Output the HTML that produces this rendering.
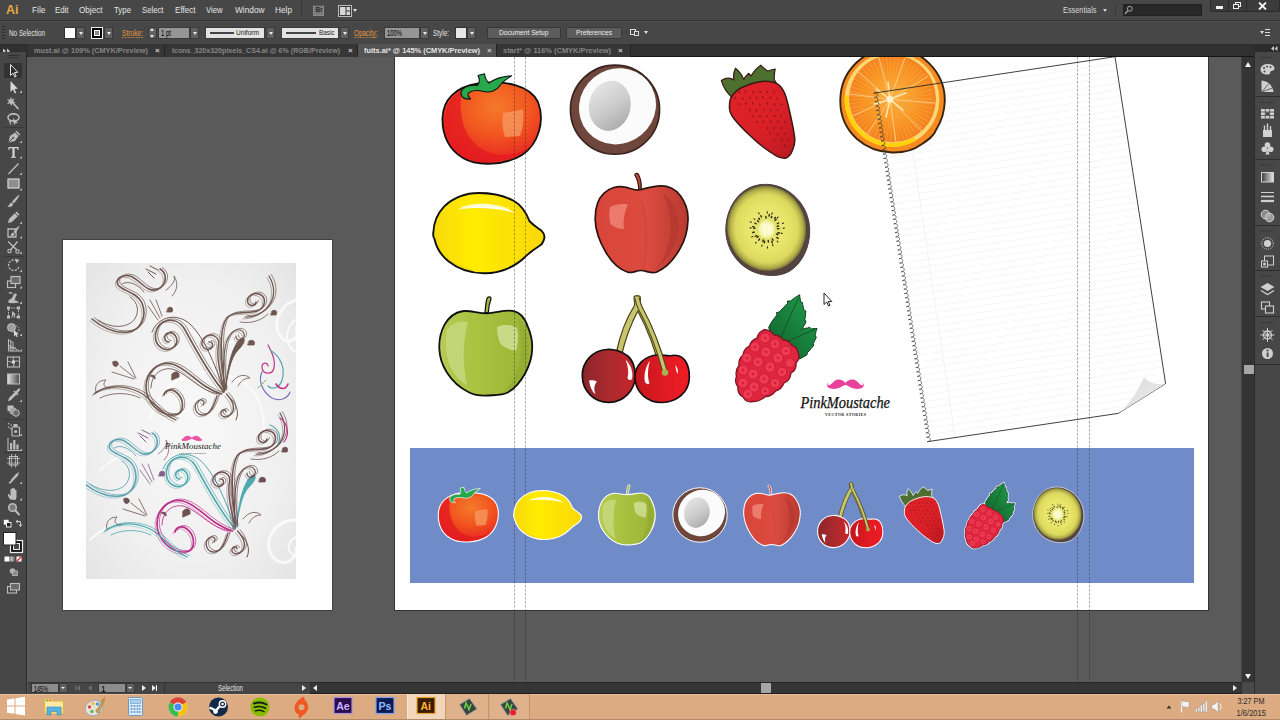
<!DOCTYPE html>
<html><head><meta charset="utf-8">
<style>
*{box-sizing:border-box;margin:0;padding:0}
html,body{width:1280px;height:720px;overflow:hidden;background:#5a5a5a;font-family:"Liberation Sans",sans-serif;}
.abs{position:absolute}
.t{position:absolute;white-space:nowrap;transform-origin:0 0;line-height:1}
#menubar{position:absolute;left:0;top:0;width:1280px;height:21px;background:#474747;border-bottom:1px solid #343434}
#menubar .mi{font-size:9.5px;color:#e4e4e4;top:5px}
#ctrl{position:absolute;left:0;top:21px;width:1280px;height:23px;background:#474747;border-top:1px solid #4f4f4f;}
#ctrl .lbl{font-size:8.5px;color:#e6e6e6;top:7px}
#ctrl .or{color:#e59a3c;border-bottom:1px dotted #e59a3c;height:8.500px}
.dd{position:absolute;top:5px;height:12px;width:9px;background:#5f5f5f;border:1px solid #3a3a3a}
.dd:after{content:"";position:absolute;left:1.5px;top:3.5px;border:2.5px solid transparent;border-top:3px solid #e8e8e8}
.fld{position:absolute;top:5px;height:12px;background:#959595;border:1px solid #3a3a3a;font-size:8px;color:#1c1c1c;line-height:10px;padding-left:2px}
.fld .t{color:#000;font-size:8.5px}
.lbox{position:absolute;top:5px;height:12px;background:#e3e3e3;border:1px solid #3a3a3a;font-size:8px;color:#222;line-height:10px}
.btn{position:absolute;top:5px;height:12px;background:#5c5c5c;border:1px solid #383838;font-size:8px;color:#ececec;line-height:10px;text-align:center;border-radius:1px}
#tabs{position:absolute;left:0;top:44px;width:1254px;height:13px;background:#303030;border-top:1px solid #2a2a2a;border-bottom:1px solid #161616}
.tab{position:absolute;top:-1px;height:13px;background:#363636;border-right:1px solid #242424}
.tab .t{font-size:8px;font-weight:bold;color:#868686;top:3px}
.tab.act{background:#535353;}
.tab.act .t{color:#e4e4e4}
.tab .x{position:absolute;top:2px;font-size:8px;color:#d0d0d0;font-weight:bold;line-height:10px}
#tools{position:absolute;left:0;top:57px;width:27px;height:637px;background:#474747;border-right:1px solid #2e2e2e}
#canvas{position:absolute;left:28px;top:57px;width:1213px;height:625px;background:#5a5a5a;overflow:hidden}
#status{position:absolute;left:28px;top:682px;width:1227px;height:12px;background:#353535;box-shadow:inset 0 1px 0 #272727,inset 0 -1px 0 #241c18}
#vscroll{position:absolute;left:1241px;top:57px;width:14px;height:625px;background:#343434;border-left:1px solid #444;border-right:1px solid #2a2a2a}
#rpanel{position:absolute;left:1254px;top:44px;width:26px;height:650px;background:#474747;border-left:1px solid #2c2c2c}
#taskbar{position:absolute;left:0;top:694px;width:1280px;height:26px;background:#dcab82}
</style></head><body>
<div id="menubar">
  <div class="t" style="left:5.500px;top:3px;font-size:13.500px;font-weight:bold;color:#e9a846;transform:scaleX(0.926)">Ai</div>
  <div class="t mi" style="left:32px;transform:scaleX(0.882)">File</div>
  <div class="t mi" style="left:55px;transform:scaleX(0.824)">Edit</div>
  <div class="t mi" style="left:79px;transform:scaleX(0.856)">Object</div>
  <div class="t mi" style="left:114px;transform:scaleX(0.825)">Type</div>
  <div class="t mi" style="left:142px;transform:scaleX(0.814)">Select</div>
  <div class="t mi" style="left:175px;transform:scaleX(0.850)">Effect</div>
  <div class="t mi" style="left:206px;transform:scaleX(0.808)">View</div>
  <div class="t mi" style="left:235px;transform:scaleX(0.873)">Window</div>
  <div class="t mi" style="left:275px;transform:scaleX(0.870)">Help</div>
  <div class="abs" style="left:301px;top:0;width:1px;height:17px;background:#3a3a3a"></div>
  <div class="abs" style="left:312.500px;top:4.500px;width:11.500px;height:11.500px;background:#7b7b7b;border:1px solid #8a8a8a;border-top-color:#5a5a5a"></div>
  <div class="t" style="left:315.500px;top:7px;font-size:6.500px;color:#2c2c2c;font-weight:bold">Br</div>
  <svg class="abs" style="left:338px;top:4.500px" width="14" height="12" viewBox="0 0 14 12"><rect x=".5" y=".5" width="13" height="11" fill="#3a3a3a" stroke="#bdbdbd" stroke-width="1"></rect><rect x="2" y="2" width="5.500" height="8" fill="#d6d6d6"></rect><rect x="8.500" y="2" width="3.500" height="3.500" fill="#d6d6d6"></rect><rect x="8.500" y="6.500" width="3.500" height="3.500" fill="#d6d6d6"></rect></svg>
  <div class="abs" style="left:352.500px;top:8.500px;border:2.500px solid transparent;border-top:3.500px solid #e0e0e0"></div>
  <div class="t mi" style="left:1063px;color:#d6d6d6;transform:scaleX(0.773)">Essentials</div>
  <div class="abs" style="left:1103px;top:9px;border:2.5px solid transparent;border-top:3px solid #d0d0d0"></div>
  <div class="abs" style="left:1115px;top:3px;width:1px;height:14px;background:#3a3a3a"></div>
  <div class="abs" style="left:1123px;top:4px;width:79px;height:12px;background:#282828;border:1px solid #222"></div>
  <svg class="abs" style="left:1124px;top:5px" width="10" height="10" viewBox="0 0 10 10"><circle cx="5.8" cy="3.8" r="2.4" fill="none" stroke="#a8a8a8" stroke-width="1"></circle><path d="M4 5.6L1 8.8" stroke="#a8a8a8" stroke-width="1.3"></path></svg>
  <div class="abs" style="left:1210px;top:0;width:70px;height:12px;background:#3b3b3b;border:1px solid #2a2a2a;border-top:0;border-radius:0 0 2px 2px"></div>
  <div class="abs" style="left:1228px;top:0;width:1px;height:12px;background:#2a2a2a"></div>
  <div class="abs" style="left:1246px;top:0;width:1px;height:12px;background:#2a2a2a"></div>
  <div class="abs" style="left:1216px;top:6px;width:7px;height:3px;background:#f0f0f0"></div>
  <div class="abs" style="left:1235px;top:2px;width:6px;height:5px;border:1.5px solid #f0f0f0"></div>
  <div class="abs" style="left:1233px;top:4px;width:6px;height:5px;border:1.5px solid #f0f0f0;background:#3b3b3b"></div>
  <svg class="abs" style="left:1258px;top:2px" width="9" height="8" viewBox="0 0 9 8"><path d="M1 0.5L8 7.5M8 0.5L1 7.5" stroke="#f4f4f4" stroke-width="1.8"></path></svg>
</div>
<div id="ctrl">
  <div class="abs" style="left:2px;top:4px;width:3px;height:15px;background:repeating-linear-gradient(180deg,#2e2e2e 0 1px,transparent 1px 3px)"></div>
  <div class="t lbl" style="left:9px;transform:scaleX(0.747)">No Selection</div>
  <div class="abs" style="left:64px;top:5px;width:12px;height:12px;background:#fff;border:1px solid #333"></div>
  <div class="dd" style="left:76px"></div>
  <div class="abs" style="left:91px;top:5px;width:12px;height:12px;background:#000;border:1px solid #eee"></div>
  <div class="abs" style="left:94px;top:8px;width:6px;height:6px;background:#888;border:1px solid #fff"></div>
  <div class="dd" style="left:104px"></div>
  <div class="t lbl or" style="left:122px;transform:scaleX(0.780)">Stroke:</div>
  <div class="abs" style="left:148px;top:5px;width:9px;height:12px;background:#5f5f5f;border:1px solid #3a3a3a"></div>
  <div class="abs" style="left:150px;top:6px;border:2.5px solid transparent;border-bottom:3px solid #e8e8e8;border-top:0"></div>
  <div class="abs" style="left:150px;top:12.5px;border:2.5px solid transparent;border-top:3px solid #e8e8e8;border-bottom:0"></div>
  <div class="fld" style="left:158px;width:32px"><div class="t" style="left:2px;top:1px;transform:scaleX(0.705)">1 pt</div></div>
  <div class="dd" style="left:190px"></div>
  <div class="lbox" style="left:205px;width:60px"><div class="abs" style="left:4px;top:4px;width:24px;height:2px;background:#444"></div><div class="t" style="left:30px;top:1px;transform:scaleX(0.821)">Uniform</div></div>
  <div class="dd" style="left:266px"></div>
  <div class="lbox" style="left:281px;width:58px"><div class="abs" style="left:4px;top:4px;width:30px;height:2px;background:#444"></div><div class="t" style="left:37px;top:1px;transform:scaleX(0.792)">Basic</div></div>
  <div class="dd" style="left:340px"></div>
  <div class="t lbl or" style="left:354px;transform:scaleX(0.754)">Opacity:</div>
  <div class="fld" style="left:384px;width:36px"><div class="t" style="left:2px;top:1px;transform:scaleX(0.690)">100%</div></div>
  <div class="dd" style="left:420px"></div>
  <div class="t lbl" style="left:433px;transform:scaleX(0.752)">Style:</div>
  <div class="abs" style="left:455px;top:5px;width:12px;height:12px;background:#e6e6e6;border:1px solid #333"></div>
  <div class="dd" style="left:467px"></div>
  <div class="btn" style="left:487px;width:74px"><div class="t" style="left:11px;top:1px;transform:scaleX(0.831)">Document Setup</div></div>
  <div class="btn" style="left:566px;width:56px"><div class="t" style="left:9px;top:1px;transform:scaleX(0.834)">Preferences</div></div>
  <div class="abs" style="left:630px;top:7px;width:6px;height:6px;border:1px solid #ddd"></div>
  <div class="abs" style="left:634px;top:9px;width:5px;height:5px;border:1px solid #ddd;background:#474747"></div>
  <div class="abs" style="left:644px;top:9px;border:2.5px solid transparent;border-top:3.5px solid #e0e0e0"></div>
  <div class="abs" style="left:1260px;top:9px;border:2px solid transparent;border-top:3px solid #ddd"></div>
  <div class="abs" style="left:1265px;top:7px;width:5px;height:7px;background:repeating-linear-gradient(180deg,#ddd 0 1px,transparent 1px 3px)"></div>
</div>
<div id="tabs">
  <svg class="abs" style="left:3px;top:3px" width="8" height="6" viewBox="0 0 8 6"><path d="M0 0.500L3 3L0 5.500ZM4 0.500L7 3L4 5.500Z" fill="#c8c8c8"></path></svg>
  <div class="tab" style="left:28px;width:137px"><div class="t" style="left:6px;transform:scaleX(0.917)">must.ai @ 109% (CMYK/Preview)</div><div class="x" style="left:127px">×</div></div>
  <div class="tab" style="left:165px;width:193px"><div class="t" style="left:7px;transform:scaleX(0.886)">Icons_320x320pixels_CS4.ai @ 6% (RGB/Preview)</div><div class="x" style="left:183px">×</div></div>
  <div class="tab act" style="left:358px;width:139px"><div class="t" style="left:6px;transform:scaleX(0.927)">fuits.ai* @ 145% (CMYK/Preview)</div><div class="x" style="left:129px">×</div></div>
  <div class="tab" style="left:497px;width:134px"><div class="t" style="left:6px;transform:scaleX(0.929)">start* @ 116% (CMYK/Preview)</div><div class="x" style="left:121px">×</div></div>
</div>
<div id="tools" style="top:52px;height:642px"></div>
<svg class="abs" style="left:0;top:52px" width="27" height="642" viewBox="0 52 27 642" fill="none" stroke="none">
  <g fill="#2f2f2f"><rect x="8" y="55" width="11" height="1"></rect><rect x="8" y="57" width="11" height="1" opacity=".5"></rect></g>
  <!-- separators -->
  <g fill="#393939"><rect x="3" y="127" width="21" height="1"></rect><rect x="3" y="256" width="21" height="1"></rect><rect x="3" y="353" width="21" height="1"></rect><rect x="3" y="419" width="21" height="1"></rect><rect x="3" y="452" width="21" height="1"></rect></g>
  <!-- selected tool bg -->
  <rect x="4" y="63" width="18" height="15" rx="1" fill="#333"></rect>
  <!-- selection (black arrow w/ white outline) -->
  <path d="M10.5 64.5L10.5 75.5L13 73L14.8 77L16.2 76.3L14.5 72.5L17.8 72.3Z" fill="#2a2a2a" stroke="#e6e6e6" stroke-width="1" stroke-linejoin="round"></path>
  <!-- direct selection (white arrow) -->
  <path d="M10.5 81L10.5 92L13 89.5L14.8 93.5L16.2 92.8L14.5 89L17.8 88.8Z" fill="#d8d8d8"></path>
  <!-- magic wand -->
  <path d="M12 102L18 108.5" stroke="#bdbdbd" stroke-width="1.8" stroke-linecap="round"></path>
  <path d="M11 96.5L11.8 99.5L14.8 98.5L13 101L15.5 103L12.3 103L11.5 106L10 103.2L7 104L9 101.5L6.8 99.3L10 99.8Z" fill="#bdbdbd"></path>
  <!-- lasso -->
  <ellipse cx="13.5" cy="117.5" rx="5.5" ry="3.6" stroke="#bdbdbd" stroke-width="1.6"></ellipse>
  <path d="M10 120C9 122 11 123 10.5 124.5" stroke="#bdbdbd" stroke-width="1.2"></path>
  <path d="M13 118L18 123L15.5 123.2L14 125Z" fill="#bdbdbd"></path>
  <!-- pen -->
  <path d="M8.5 142.5L10 136L15 132.5L18.5 136L15 141Z" fill="#bdbdbd"></path>
  <path d="M8.5 142.5L13 138" stroke="#474747" stroke-width="1"></path>
  <circle cx="13.3" cy="137.7" r="1" fill="#474747"></circle>
  <path d="M16 131.2L19.8 135" stroke="#bdbdbd" stroke-width="1.5"></path>
  <!-- type -->
  <path d="M8.5 147H18.5V150H17.6L17.2 148.3H14.6V156.5L16 157V157.8H11V157L12.4 156.5V148.3H9.8L9.4 150H8.5Z" fill="#d6d6d6"></path>
  <!-- line -->
  <path d="M8.5 174L18.5 163.5" stroke="#bdbdbd" stroke-width="1.3"></path>
  <!-- rectangle -->
  <rect x="8" y="179" width="11" height="9" fill="#8d8d8d" stroke="#d4d4d4" stroke-width="1.2"></rect>
  <!-- brush -->
  <path d="M19.5 194.5C17 196 13.5 199.5 12 202L13.5 203.5C16 201 19 197.5 19.5 194.5Z" fill="#bdbdbd"></path>
  <path d="M11.5 202.5C9.5 203 9.5 205.5 7.5 206.5C10 207.5 13 206.5 13 204Z" fill="#bdbdbd"></path>
  <!-- pencil -->
  <path d="M8 223L9 219L16.5 211.5L19.5 214.5L12 222Z" fill="#bdbdbd"></path>
  <path d="M15 213L18 216" stroke="#474747" stroke-width="1"></path>
  <!-- blob brush/eraser -->
  <path d="M8 229H16V237H8Z" stroke="#bdbdbd" stroke-width="1.3"></path>
  <path d="M19.5 225.5C17.5 227 14.5 230 13.5 232L15 233.5C17 231 19 228 19.5 225.5Z" fill="#bdbdbd"></path>
  <path d="M13 232.5C11 233 11.5 235 10 235.5C12 236.5 14.5 236 14.5 234Z" fill="#bdbdbd"></path>
  <!-- scissors -->
  <path d="M8 241.5L17 250M17.5 241.5L10.5 250" stroke="#bdbdbd" stroke-width="1.3"></path>
  <circle cx="9.5" cy="251" r="1.7" stroke="#bdbdbd" stroke-width="1.1"></circle><circle cx="17.5" cy="251.5" r="1.7" stroke="#bdbdbd" stroke-width="1.1"></circle>
  <!-- rotate -->
  <path d="M17 261A5.3 5.3 0 1 0 18.8 267" stroke="#bdbdbd" stroke-width="1.3" stroke-dasharray="2.2 1.2"></path>
  <path d="M15 258.5L19.5 260L16.5 263.5Z" fill="#bdbdbd"></path>
  <!-- scale -->
  <rect x="7.5" y="281" width="8" height="6.5" stroke="#bdbdbd" stroke-width="1.2"></rect>
  <rect x="11" y="276.5" width="9" height="7" stroke="#bdbdbd" stroke-width="1.2" fill="#6a6a6a"></rect>
  <!-- warp -->
  <path d="M8 302C10 297 11 301 13 296C14 293 16 293 17 295C15 296 16 299 14 301C16 300 18 301 19 303C16 302 14 304 11 303C10 303 9 303 8 302Z" fill="#bdbdbd"></path>
  <path d="M9 293.5C10 292 12 292.5 12 294" stroke="#bdbdbd" stroke-width="1.2"></path>
  <!-- free transform -->
  <rect x="8.5" y="308" width="10" height="9" stroke="#bdbdbd" stroke-width="1" stroke-dasharray="1.5 1"></rect>
  <g fill="#bdbdbd"><rect x="7" y="306.5" width="3" height="3"></rect><rect x="17" y="306.5" width="3" height="3"></rect><rect x="7" y="315.500" width="3" height="3"></rect><rect x="17" y="315.5" width="3" height="3"></rect></g>
  <path d="M12 311L12 316.500L13.500 315L14.600 317L15.400 316.600L14.400 314.600L16.2 314.500Z" fill="#bdbdbd"></path>
  <!-- shape builder -->
  <circle cx="11.5" cy="327.5" r="4" fill="#9a9a9a" stroke="#bdbdbd" stroke-width="1"></circle>
  <circle cx="15.5" cy="329.5" r="3.6" stroke="#bdbdbd" stroke-width="1" stroke-dasharray="1.4 1"></circle>
  <path d="M14 330L14 336.500L15.600 335L16.800 337.300L17.800 336.800L16.600 334.600L18.700 334.400Z" fill="#d8d8d8"></path>
  <!-- perspective grid -->
  <path d="M8.5 339.500V351H19.500M8.500 339.500L13 342.500V351M8.500 345L19.500 351M10.800 341V351M8.500 348H16" stroke="#bdbdbd" stroke-width="1"></path>
  <!-- mesh -->
  <rect x="7.500" y="357" width="12" height="10" stroke="#bdbdbd" stroke-width="1.1"></rect>
  <path d="M7.500 362C10 360 12 364 14 362S18 361 19.500 362M13.500 357C12 360 15 363 13.500 367" stroke="#bdbdbd" stroke-width="1"></path>
  <rect x="12" y="360.500" width="3" height="3" fill="#d8d8d8"></rect>
  <!-- gradient -->
  <defs><linearGradient id="tg" x1="0" x2="1"><stop offset="0" stop-color="#e0e0e0"></stop><stop offset="1" stop-color="#4a4a4a"></stop></linearGradient></defs>
  <rect x="7.500" y="374" width="12" height="10" fill="url(#tg)" stroke="#bdbdbd" stroke-width="1"></rect>
  <!-- eyedropper -->
  <path d="M8 401.500L9 398L14.500 392.500L16.500 394.500L11 400Z" fill="#bdbdbd"></path>
  <path d="M14 391L18 395" stroke="#bdbdbd" stroke-width="1.6"></path>
  <path d="M16.500 392.500L19 389.500" stroke="#bdbdbd" stroke-width="2.4" stroke-linecap="round"></path>
  <!-- blend -->
  <rect x="7.500" y="405.500" width="6" height="5.500" fill="#bdbdbd"></rect>
  <circle cx="13" cy="411" r="3.300" fill="#a0a0a0" stroke="#bdbdbd" stroke-width=".8"></circle>
  <circle cx="16" cy="413" r="3.300" fill="#6a6a6a" stroke="#bdbdbd" stroke-width="1"></circle>
  <!-- symbol sprayer -->
  <rect x="12" y="427" width="7.500" height="9" rx="1" stroke="#bdbdbd" stroke-width="1.2"></rect>
  <rect x="13.500" y="424" width="4" height="3" fill="#bdbdbd"></rect>
  <circle cx="15.700" cy="431.500" r="1.600" fill="#bdbdbd"></circle>
  <g fill="#bdbdbd"><rect x="8" y="423" width="1.300" height="1.300"></rect><rect x="10.500" y="424.500" width="1.300" height="1.300"></rect><rect x="8" y="426.500" width="1.300" height="1.300"></rect><rect x="10" y="428" width="1.200" height="1.200"></rect></g>
  <!-- graph -->
  <path d="M8 438V450.500H20" stroke="#bdbdbd" stroke-width="1.100"></path>
  <g fill="#bdbdbd"><rect x="10" y="443" width="2.200" height="6.500"></rect><rect x="13.200" y="440" width="2.200" height="9.500"></rect><rect x="16.400" y="444.500" width="2.200" height="5"></rect></g>
  <!-- artboard -->
  <rect x="9.500" y="456.500" width="8" height="8.500" stroke="#bdbdbd" stroke-width="1.100"></rect>
  <path d="M7 458.500H20M7 463H20M11.500 454V467.500M15.500 454V467.500" stroke="#bdbdbd" stroke-width=".8"></path>
  <!-- slice -->
  <path d="M8 483L16 474L19 472L18 475.500L10.500 483.500Z" fill="#bdbdbd"></path>
  <path d="M8 483L11 480" stroke="#474747" stroke-width=".8"></path>
  <!-- hand -->
  <path d="M10 499.500C8.500 497 7.500 495 8 494C9 493.500 10 495 10.500 496V489.500C10.500 488.500 12 488.500 12 489.500V493.500V488.500C12 487.500 13.500 487.500 13.500 488.500V493.500V489C13.500 488 15 488 15 489V494V490.500C15 489.500 16.500 489.500 16.500 490.500V496.500C16.500 498 16 499 15.500 500Z" fill="#bdbdbd"></path>
  <!-- zoom -->
  <circle cx="12.500" cy="507.500" r="3.800" stroke="#bdbdbd" stroke-width="1.500" fill="#7a7a7a"></circle>
  <path d="M15.300 510.500L19 514.500" stroke="#bdbdbd" stroke-width="2" stroke-linecap="round"></path>
  <!-- default / swap -->
  <rect x="4" y="520" width="4.500" height="4.500" fill="#fff" stroke="#ddd" stroke-width=".5"></rect>
  <rect x="6.500" y="522.500" width="4.500" height="4.500" fill="#222" stroke="#eee" stroke-width="1"></rect>
  <path d="M16.500 521.500H20.500V526M18 520L16 521.500L18 523M19 524.500L20.500 526.500L22 524.500" stroke="#d8d8d8" stroke-width=".9"></path>
  <!-- stroke (behind) / fill -->
  <rect x="10.500" y="540.500" width="12" height="12" fill="#111" stroke="#efefef" stroke-width="1.200"></rect>
  <rect x="13.500" y="543.500" width="6" height="6" fill="#474747" stroke="#efefef" stroke-width="1"></rect>
  <rect x="3.500" y="532.500" width="12.500" height="12.500" fill="#fff" stroke="#222" stroke-width="1"></rect>
  <!-- color / gradient / none -->
  <rect x="4.500" y="556.500" width="5" height="5" fill="#fff"></rect>
  <rect x="10.500" y="556.500" width="5" height="5" fill="url(#tg)"></rect>
  <rect x="16.500" y="556.500" width="5" height="5" fill="#fff"></rect><path d="M16.500 561.500L21.500 556.500" stroke="#d22" stroke-width="1.200"></path>
  <!-- draw mode -->
  <circle cx="12.500" cy="571" r="2.800" fill="#b0b0b0"></circle><rect x="12.500" y="571" width="5" height="4.500" fill="#8a8a8a" stroke="#bdbdbd" stroke-width=".8"></rect>
  <!-- screen mode -->
  <rect x="7.500" y="586.500" width="9" height="6.500" stroke="#bdbdbd" stroke-width="1.100"></rect>
  <rect x="10.500" y="583.500" width="9" height="6.500" stroke="#bdbdbd" stroke-width="1.100" fill="#6a6a6a"></rect>
  <!-- flyout triangles -->
  <g fill="#bdbdbd">
    <path d="M22 93v-2.500l-2.500 2.500z"></path><path d="M22 143v-2.500l-2.500 2.500z"></path><path d="M22 158.500v-2.500l-2.500 2.500z"></path><path d="M22 175v-2.500l-2.500 2.500z"></path><path d="M22 190.500v-2.500l-2.500 2.500z"></path>
    <path d="M22 224v-2.500l-2.500 2.500z"></path><path d="M22 238.500v-2.500l-2.500 2.500z"></path><path d="M22 254v-2.500l-2.500 2.500z"></path><path d="M22 272v-2.500l-2.500 2.500z"></path><path d="M22 288.500v-2.500l-2.500 2.500z"></path><path d="M22 304v-2.500l-2.500 2.500z"></path>
    <path d="M22 336v-2.500l-2.500 2.500z"></path><path d="M22 351.500v-2.500l-2.500 2.500z"></path><path d="M22 402v-2.500l-2.500 2.500z"></path><path d="M22 436v-2.500l-2.500 2.500z"></path><path d="M22 451v-2.500l-2.500 2.500z"></path><path d="M22 484v-2.500l-2.500 2.500z"></path><path d="M22 500.500v-2.500l-2.500 2.500z"></path>
  </g>
</svg>
<div id="canvas">
  <div class="abs" id="ab1" style="left:35px;top:183px;width:269px;height:369.500px;background:#fff;box-shadow:0 0 0 1px #414141"></div>
  <div class="abs" id="ab2" style="left:367px;top:0;width:813px;height:552.500px;background:#fff;box-shadow:0 0 0 1px #333"></div>
  <div class="abs" style="left:382px;top:391px;width:783.700px;height:134.600px;background:#6f8cc8"></div>
<svg class="abs" style="left:0;top:0" width="1213" height="625" viewBox="28 57 1213 625">
<defs>
  <radialGradient id="gTom" cx="0.55" cy="0.3" r="0.75"><stop offset="0" stop-color="#f47a2a"></stop><stop offset="0.45" stop-color="#f2571f"></stop><stop offset="1" stop-color="#e51b24"></stop></radialGradient>
  <linearGradient id="gLem" x1="0" x2="1"><stop offset="0" stop-color="#f8d90c"></stop><stop offset="0.35" stop-color="#ffec00"></stop><stop offset="1" stop-color="#fbd80a"></stop></linearGradient>
  <linearGradient id="gCav" x1="0.15" y1="0.1" x2="0.85" y2="0.95"><stop offset="0" stop-color="#e4e4e4"></stop><stop offset="0.5" stop-color="#cdcdcd"></stop><stop offset="1" stop-color="#a9a9a9"></stop></linearGradient>
  <radialGradient id="gKiwi" cx="0.5" cy="0.5" r="0.5"><stop offset="0" stop-color="#efec84"></stop><stop offset="0.55" stop-color="#e8e468"></stop><stop offset="0.8" stop-color="#dcd95e"></stop><stop offset="0.92" stop-color="#b3b04a"></stop><stop offset="1" stop-color="#7a7438"></stop></radialGradient>
  <radialGradient id="gOr" cx="0.5" cy="0.48" r="0.5"><stop offset="0" stop-color="#fbb040"></stop><stop offset="0.7" stop-color="#f7901e"></stop><stop offset="1" stop-color="#f58220"></stop></radialGradient>
  <linearGradient id="gChL" x1="0" x2="1"><stop offset="0" stop-color="#8a262b"></stop><stop offset="0.55" stop-color="#ae2a2e"></stop><stop offset="1" stop-color="#c8242a"></stop></linearGradient>
  <linearGradient id="gChR" x1="0" x2="1"><stop offset="0" stop-color="#c4161c"></stop><stop offset="0.6" stop-color="#e31b23"></stop><stop offset="1" stop-color="#ed1c24"></stop></linearGradient>
  <linearGradient id="gStr" x1="0" y1="0" x2="1" y2="1"><stop offset="0" stop-color="#e2232a"></stop><stop offset="0.6" stop-color="#d81f27"></stop><stop offset="1" stop-color="#b8181f"></stop></linearGradient>
  <linearGradient id="gLeaf" x1="0" y1="1" x2="1" y2="0"><stop offset="0" stop-color="#0f5e2c"></stop><stop offset="1" stop-color="#22a04c"></stop></linearGradient>
  <linearGradient id="gAppR" x1="0" x2="1"><stop offset="0" stop-color="#d9453a"></stop><stop offset="0.55" stop-color="#dc4b3f"></stop><stop offset="1" stop-color="#b93a30"></stop></linearGradient>
  <linearGradient id="gAppG" x1="0" x2="1"><stop offset="0" stop-color="#b6cb55"></stop><stop offset="0.4" stop-color="#a9c240"></stop><stop offset="1" stop-color="#9bb336"></stop></linearGradient>

  <g id="tomato">
    <path d="M442.500 118C443 100 455 87 478 83.500C505 80 530 85 538 102C545 120 539 144 522 155C506 165 478 167 463 158C449 150 442 135 442.500 118Z" fill="url(#gTom)" stroke="currentColor" stroke-width="1.800"></path>
    <path d="M444 120C445 105 452 95 462 90C458 110 462 135 480 148C495 158 515 156 528 148C515 162 480 166 464 157C450 149 444 135 444 120Z" fill="#e31a22" opacity=".75"></path>
    <path d="M503 113L523 109.500C524 118 523 128 520 136L505 137C502 128 502 120 503 113Z" fill="#f7935a" opacity=".85"></path>
    <path d="M461 93.500C461 88 468 84.500 477.500 85.500C480 82.500 479.500 78.500 478 75.500L484.500 73.800C485 77.500 486.500 81 489 83C494 79.500 501 76.500 511.500 75.800C507 79 502.500 81.500 500 85.500C497 90.500 490 93 484 91.500C478 90 471.500 90.500 468.500 93C467 95 468.500 97 470.500 99C465.500 99.500 461 97.500 461 93.500Z" fill="#27a84a" stroke="currentColor" stroke-width="1.100" stroke-linejoin="round"></path>
  </g>
  <g id="coconut">
    <circle cx="615" cy="109.700" r="44.600" fill="#6f463b" stroke="currentColor" stroke-width="1.600"></circle>
    <ellipse cx="617.500" cy="106.300" rx="39.300" ry="37.300" fill="#fbfbfb" transform="rotate(-40 617.500 106.300)"></ellipse>
    <ellipse cx="609.800" cy="105.750" rx="20.800" ry="25.200" fill="url(#gCav)" transform="rotate(12 609.800 105.750)"></ellipse>
  </g>
  <g id="strawberry">
    <path d="M721.300 80.400C727 77 731 78 734 80C733 75 734 71 735.500 68.200C739 71 742 75 743.700 79.400C745 77 747 75 748.750 73.300L751 76C754 71 757 67.500 760.900 65.200C763 68 766 70 768 71.250C770 70 773 69.500 775.200 69.200C774 73 774.500 76 774.100 79.400L778 86L746 88L732.500 98C727 93 723 87 721.300 80.400Z" fill="#4d7030" stroke="currentColor" stroke-width="1.200" stroke-linejoin="round"></path>
    <path d="M730.500 98.700C734 92 740 87.500 746.700 85.500C754 82.500 762 80.500 769 81.400C775 82 779 84 781.300 87.500C784 91 786 96 787.300 101.700C790 113 793 125 794.500 136.300C795.300 141 794.500 146 792.400 150.500C791 154 788.500 157.500 785.300 158.200C780 158.500 775 155.500 771.100 152.500C764 148 757 142.500 750.800 136.300C744 130 738 124 733.500 118C730.500 114 729 110 729.500 105.800C729.500 103 729.800 100.500 730.500 98.700Z" fill="url(#gStr)" stroke="currentColor" stroke-width="1.500"></path>
    <g fill="#7c1519" opacity=".85"><ellipse cx="739.5" cy="92.5" rx=".8" ry="1.1" transform="rotate(-20 739.5 92.5)"></ellipse><ellipse cx="745.5" cy="91.5" rx=".8" ry="1.1" transform="rotate(-20 745.5 91.5)"></ellipse><ellipse cx="753.4" cy="92.3" rx=".8" ry="1.1" transform="rotate(-20 753.4 92.3)"></ellipse><ellipse cx="760.2" cy="91.8" rx=".8" ry="1.1" transform="rotate(-20 760.2 91.8)"></ellipse><ellipse cx="767.1" cy="92.1" rx=".8" ry="1.1" transform="rotate(-20 767.1 92.1)"></ellipse><ellipse cx="774.1" cy="91.6" rx=".8" ry="1.1" transform="rotate(-20 774.1 91.6)"></ellipse><ellipse cx="735.4" cy="97.9" rx=".8" ry="1.1" transform="rotate(-20 735.4 97.9)"></ellipse><ellipse cx="742.8" cy="98.6" rx=".8" ry="1.1" transform="rotate(-20 742.8 98.6)"></ellipse><ellipse cx="750.0" cy="98.1" rx=".8" ry="1.1" transform="rotate(-20 750.0 98.1)"></ellipse><ellipse cx="756.4" cy="97.7" rx=".8" ry="1.1" transform="rotate(-20 756.4 97.7)"></ellipse><ellipse cx="762.9" cy="97.4" rx=".8" ry="1.1" transform="rotate(-20 762.9 97.4)"></ellipse><ellipse cx="770.5" cy="97.8" rx=".8" ry="1.1" transform="rotate(-20 770.5 97.8)"></ellipse><ellipse cx="777.4" cy="98.5" rx=".8" ry="1.1" transform="rotate(-20 777.4 98.5)"></ellipse><ellipse cx="739.0" cy="104.1" rx=".8" ry="1.1" transform="rotate(-20 739.0 104.1)"></ellipse><ellipse cx="745.7" cy="103.4" rx=".8" ry="1.1" transform="rotate(-20 745.7 103.4)"></ellipse><ellipse cx="752.8" cy="103.6" rx=".8" ry="1.1" transform="rotate(-20 752.8 103.6)"></ellipse><ellipse cx="760.0" cy="104.6" rx=".8" ry="1.1" transform="rotate(-20 760.0 104.6)"></ellipse><ellipse cx="767.2" cy="103.6" rx=".8" ry="1.1" transform="rotate(-20 767.2 103.6)"></ellipse><ellipse cx="774.5" cy="104.4" rx=".8" ry="1.1" transform="rotate(-20 774.5 104.4)"></ellipse><ellipse cx="781.3" cy="104.5" rx=".8" ry="1.1" transform="rotate(-20 781.3 104.5)"></ellipse><ellipse cx="749.8" cy="110.3" rx=".8" ry="1.1" transform="rotate(-20 749.8 110.3)"></ellipse><ellipse cx="756.3" cy="110.6" rx=".8" ry="1.1" transform="rotate(-20 756.3 110.6)"></ellipse><ellipse cx="764.1" cy="109.6" rx=".8" ry="1.1" transform="rotate(-20 764.1 109.6)"></ellipse><ellipse cx="770.8" cy="110.3" rx=".8" ry="1.1" transform="rotate(-20 770.8 110.3)"></ellipse><ellipse cx="777.5" cy="110.0" rx=".8" ry="1.1" transform="rotate(-20 777.5 110.0)"></ellipse><ellipse cx="753.0" cy="116.5" rx=".8" ry="1.1" transform="rotate(-20 753.0 116.5)"></ellipse><ellipse cx="760.0" cy="116.4" rx=".8" ry="1.1" transform="rotate(-20 760.0 116.4)"></ellipse><ellipse cx="766.8" cy="116.5" rx=".8" ry="1.1" transform="rotate(-20 766.8 116.5)"></ellipse><ellipse cx="774.5" cy="116.0" rx=".8" ry="1.1" transform="rotate(-20 774.5 116.0)"></ellipse><ellipse cx="781.1" cy="116.5" rx=".8" ry="1.1" transform="rotate(-20 781.1 116.5)"></ellipse><ellipse cx="756.8" cy="122.0" rx=".8" ry="1.1" transform="rotate(-20 756.8 122.0)"></ellipse><ellipse cx="763.2" cy="121.8" rx=".8" ry="1.1" transform="rotate(-20 763.2 121.8)"></ellipse><ellipse cx="770.7" cy="121.6" rx=".8" ry="1.1" transform="rotate(-20 770.7 121.6)"></ellipse><ellipse cx="778.0" cy="121.7" rx=".8" ry="1.1" transform="rotate(-20 778.0 121.7)"></ellipse><ellipse cx="785.0" cy="121.8" rx=".8" ry="1.1" transform="rotate(-20 785.0 121.8)"></ellipse><ellipse cx="767.5" cy="128.2" rx=".8" ry="1.1" transform="rotate(-20 767.5 128.2)"></ellipse><ellipse cx="774.0" cy="128.0" rx=".8" ry="1.1" transform="rotate(-20 774.0 128.0)"></ellipse><ellipse cx="781.2" cy="128.1" rx=".8" ry="1.1" transform="rotate(-20 781.2 128.1)"></ellipse><ellipse cx="770.3" cy="133.6" rx=".8" ry="1.1" transform="rotate(-20 770.3 133.6)"></ellipse><ellipse cx="777.5" cy="134.5" rx=".8" ry="1.1" transform="rotate(-20 777.5 134.5)"></ellipse><ellipse cx="784.6" cy="133.5" rx=".8" ry="1.1" transform="rotate(-20 784.6 133.5)"></ellipse><ellipse cx="774.4" cy="140.3" rx=".8" ry="1.1" transform="rotate(-20 774.4 140.3)"></ellipse><ellipse cx="781.5" cy="139.6" rx=".8" ry="1.1" transform="rotate(-20 781.5 139.6)"></ellipse><ellipse cx="788.3" cy="139.5" rx=".8" ry="1.1" transform="rotate(-20 788.3 139.5)"></ellipse><ellipse cx="784.7" cy="145.7" rx=".8" ry="1.1" transform="rotate(-20 784.7 145.7)"></ellipse></g>
  </g>
  <g id="orange">
    <path d="M892.600 48.200C921 48 945 72 944.800 100.500C944.600 112 941 122 936 130C934 136 928 140 922 144C914 150 903 152.800 892 152.500C878 152 866 147 857 139C846 129 840 115 840.300 100C840.600 71 864 48.400 892.600 48.200Z" fill="#f58a1f" stroke="currentColor" stroke-width="1.900"></path>
    <circle cx="892" cy="99.500" r="47.300" fill="#fdd675"></circle>
    <path d="M914.750 138.900A45.500 45.500 0 0 1 846.700 95.500" fill="none" stroke="#ffd200" stroke-width="4.200" opacity=".9"></path>
    <circle cx="892.500" cy="98.800" r="43.500" fill="url(#gOr)"></circle>
    <circle cx="891" cy="99.400" r="27" fill="none" stroke="#fdc070" stroke-width="30" stroke-dasharray=".7 2.100" opacity=".35"></circle>
    <g stroke="#fcd28c" stroke-width="1" opacity=".9"><path d="M890 99.400L850 94M890 99.400L858 72M890 99.400L879 58M890 99.400L905 58M890 99.400L928 76M890 99.400L935 103M890 99.400L922 131M890 99.400L896 142M890 99.400L867 135M890 99.400L852 116"></path></g>
    <g stroke="#fdebb0" stroke-width="1.500" stroke-linecap="round"><path d="M890 99.400L876 89M890 99.400L888 82M890 99.400L906 93M890 99.400L903 110M890 99.400L886 117M890 99.400L874 104"></path></g>
    <circle cx="890" cy="99.400" r="3.300" fill="#fff3cf"></circle>
  </g>
  <g id="lemon">
    <path d="M433.300 233C433.500 222 438 213 444 206.600C453 198 466 193 479 193C492 193 505 196 514 201C521 205 526 212 529.400 221C533 225 538 228 541.400 230.600C544 233 544.800 236 544.300 238.300C543.500 242 542 244.500 539.200 246C534.500 249 530 252 525 257C515 267 500 273 485.600 273.300C472 273.600 458 269 448.400 261.300C440 254.500 436 246 434.500 239C433 237 433 235 433.300 233Z" fill="url(#gLem)" stroke="currentColor" stroke-width="1.900" stroke-linejoin="round"></path>
    <path d="M458 209.500C470 201.500 497 201 516 213.500C498 207.500 474 206.800 458 209.500Z" fill="#fffef0"></path><path d="M462 208C475 204 495 204.500 508 209" stroke="#fff9b0" stroke-width="2" fill="none" opacity=".7"></path>
    <path d="M436 238C440 255 455 268 480 270.500C462 271 443 262 436 238Z" fill="#e7c30a" opacity=".7"></path>
  </g>
  <g id="appleR">
    <path d="M638.800 189.500C638.500 184 637.500 179 635 175.500C634 173.500 637.500 172.500 638.500 174.500C641 179 641.500 184 641.200 189.500Z" fill="#c4473c" stroke="currentColor" stroke-width="1.200"></path>
    <path d="M595.200 219.700C595 209 598 199 603.800 193.400C609 188 617 186 623.500 186.900C628 187.300 632 189.500 636.600 190C642 190.300 650 186 660.600 185.800C668 185.600 676 189 680.300 195.600C685 202 688.300 211 688 219.700C687.700 230 685 240 680.300 248.100C675 258 666 268 656.300 272.200C651 274 646 270.500 641 270.500C636 270.500 632 273.500 627.800 272.200C619 269.500 611 261 606 252.500C600 242.500 595.500 231 595.200 219.700Z" fill="url(#gAppR)" stroke="currentColor" stroke-width="1.700" stroke-linejoin="round"></path>
    <path d="M610 207C615 204.500 622 203.500 628 204.500C624 213 623 221 624 229C619 229 614 227 610.500 224C609 218 609 212 610 207Z" fill="#ee8577" opacity=".85"></path>
    <path d="M661 192C672 198 680 212 678 232C675 250 664 265 653 270C666 262 672 240 670 220C669 208 666 198 661 192Z" fill="#a8332b" opacity=".45"></path>
    <path d="M641 200C647 220 648 250 643 269" stroke="#c23f35" stroke-width="1" fill="none" opacity=".7"></path>
  </g>
  <g id="kiwi">
    <path d="M725.800 231C725.500 213 734 196 748 188.500C757 183.500 770 183 780 187C797 193.500 809 210 809.700 229C810.300 247 802 264 789 271.500C781 276 770 276.500 760 274C741 269.500 726.500 252 725.800 231Z" fill="#54443f" stroke="currentColor" stroke-width="1"></path>
    <ellipse cx="766.600" cy="228.300" rx="39.300" ry="42.600" fill="url(#gKiwi)" transform="rotate(-10 766.600 228.300)"></ellipse>
    <circle cx="766.700" cy="229.200" r="15" fill="#dfe066" opacity=".6"></circle>
    <g fill="#2a2412"><ellipse cx="778.2" cy="228.7" rx="1.500" ry=".75" transform="rotate(-2 778.2 228.7)"></ellipse><ellipse cx="778.7" cy="232.8" rx="1.500" ry=".75" transform="rotate(16 778.7 232.8)"></ellipse><ellipse cx="777.2" cy="234.2" rx="1.500" ry=".75" transform="rotate(25 777.2 234.2)"></ellipse><ellipse cx="777.5" cy="237.8" rx="1.500" ry=".75" transform="rotate(37 777.5 237.8)"></ellipse><ellipse cx="772.6" cy="239.6" rx="1.500" ry=".75" transform="rotate(59 772.6 239.6)"></ellipse><ellipse cx="772.0" cy="242.2" rx="1.500" ry=".75" transform="rotate(67 772.0 242.2)"></ellipse><ellipse cx="768.3" cy="241.2" rx="1.500" ry=".75" transform="rotate(82 768.3 241.2)"></ellipse><ellipse cx="764.5" cy="242.1" rx="1.500" ry=".75" transform="rotate(100 764.5 242.1)"></ellipse><ellipse cx="763.1" cy="240.7" rx="1.500" ry=".75" transform="rotate(108 763.1 240.7)"></ellipse><ellipse cx="759.1" cy="239.6" rx="1.500" ry=".75" transform="rotate(128 759.1 239.6)"></ellipse><ellipse cx="757.7" cy="236.8" rx="1.500" ry=".75" transform="rotate(141 757.7 236.8)"></ellipse><ellipse cx="756.0" cy="235.9" rx="1.500" ry=".75" transform="rotate(149 756.0 235.9)"></ellipse><ellipse cx="753.5" cy="232.3" rx="1.500" ry=".75" transform="rotate(167 753.5 232.3)"></ellipse><ellipse cx="754.2" cy="228.2" rx="1.500" ry=".75" transform="rotate(184 754.2 228.2)"></ellipse><ellipse cx="753.4" cy="226.7" rx="1.500" ry=".75" transform="rotate(190 753.4 226.7)"></ellipse><ellipse cx="755.5" cy="223.4" rx="1.500" ry=".75" transform="rotate(206 755.5 223.4)"></ellipse><ellipse cx="758.1" cy="221.2" rx="1.500" ry=".75" transform="rotate(222 758.1 221.2)"></ellipse><ellipse cx="759.2" cy="218.7" rx="1.500" ry=".75" transform="rotate(233 759.2 218.7)"></ellipse><ellipse cx="761.1" cy="216.3" rx="1.500" ry=".75" transform="rotate(245 761.1 216.3)"></ellipse><ellipse cx="765.9" cy="217.2" rx="1.500" ry=".75" transform="rotate(266 765.9 217.2)"></ellipse><ellipse cx="769.2" cy="215.3" rx="1.500" ry=".75" transform="rotate(281 769.2 215.3)"></ellipse><ellipse cx="771.5" cy="217.1" rx="1.500" ry=".75" transform="rotate(293 771.5 217.1)"></ellipse><ellipse cx="775.0" cy="218.0" rx="1.500" ry=".75" transform="rotate(308 775.0 218.0)"></ellipse><ellipse cx="775.6" cy="220.0" rx="1.500" ry=".75" transform="rotate(316 775.6 220.0)"></ellipse><ellipse cx="777.9" cy="223.3" rx="1.500" ry=".75" transform="rotate(333 777.9 223.3)"></ellipse><ellipse cx="777.8" cy="226.2" rx="1.500" ry=".75" transform="rotate(346 777.8 226.2)"></ellipse><ellipse cx="783.8" cy="228.1" rx="1.200" ry=".6" transform="rotate(-3 783.8 228.1)"></ellipse><ellipse cx="781.8" cy="233.3" rx="1.200" ry=".6" transform="rotate(15 781.8 233.3)"></ellipse><ellipse cx="777.6" cy="241.6" rx="1.200" ry=".6" transform="rotate(47 777.6 241.6)"></ellipse><ellipse cx="772.8" cy="245.2" rx="1.200" ry=".6" transform="rotate(68 772.8 245.2)"></ellipse><ellipse cx="767.5" cy="247.5" rx="1.200" ry=".6" transform="rotate(87 767.5 247.5)"></ellipse><ellipse cx="761.9" cy="245.6" rx="1.200" ry=".6" transform="rotate(107 761.9 245.6)"></ellipse><ellipse cx="755.9" cy="242.7" rx="1.200" ry=".6" transform="rotate(130 755.9 242.7)"></ellipse><ellipse cx="752.2" cy="236.8" rx="1.200" ry=".6" transform="rotate(154 752.2 236.8)"></ellipse><ellipse cx="750.6" cy="227.9" rx="1.200" ry=".6" transform="rotate(184 750.6 227.9)"></ellipse><ellipse cx="750.8" cy="222.0" rx="1.200" ry=".6" transform="rotate(204 750.8 222.0)"></ellipse><ellipse cx="754.4" cy="219.1" rx="1.200" ry=".6" transform="rotate(218 754.4 219.1)"></ellipse><ellipse cx="758.9" cy="213.3" rx="1.200" ry=".6" transform="rotate(243 758.9 213.3)"></ellipse><ellipse cx="767.3" cy="212.4" rx="1.200" ry=".6" transform="rotate(272 767.3 212.4)"></ellipse><ellipse cx="772.0" cy="213.5" rx="1.200" ry=".6" transform="rotate(290 772.0 213.5)"></ellipse><ellipse cx="777.6" cy="217.5" rx="1.200" ry=".6" transform="rotate(314 777.6 217.5)"></ellipse><ellipse cx="783.0" cy="223.3" rx="1.200" ry=".6" transform="rotate(341 783.0 223.3)"></ellipse></g>
    <ellipse cx="766.700" cy="229.200" rx="8" ry="8.800" fill="#f6f5b0"></ellipse>
    <ellipse cx="766.700" cy="229.200" rx="5.500" ry="6" fill="#fbfad0"></ellipse>
  </g>
  <g id="appleG">
    <path d="M485 312.500C485.500 307 485.800 302 487 298.500C488 296 491.500 296.500 491 299C489.500 303 488.500 307.500 488.300 312.500Z" fill="#a4b545" stroke="currentColor" stroke-width="1.200"></path>
    <path d="M439.300 348.400C439 339 441 331 444.700 324.400C449 317 455 312.500 462.200 311.250C470 309.800 478 313.500 487.300 313.250C496 313 504 309.500 512.500 310.800C520 312 525 318 527.800 326.600C530.500 333 532.500 341 532.200 348.400C532 357 529.500 365 525.600 372.500C521 381 515 388.500 508.100 392.200C502 395.500 495 395 488.400 395.500C481 396 475 395.500 468.750 392.200C460 388 452 380.500 446.900 372.500C442 365 439.600 357 439.300 348.400Z" fill="url(#gAppG)" stroke="currentColor" stroke-width="1.800" stroke-linejoin="round"></path>
    <path d="M447 330C452 323 460 320 468 322C463 340 462 362 467 385C457 380 449 368 447 355C445.500 346 445.500 338 447 330Z" fill="#cadb86" opacity=".75"></path>
    <path d="M497 327C504 324 512 324.500 517 328C519 336 518 344 516 351C509 350 503 347 500 343C498 338 497 332 497 327Z" fill="#d3e19a" opacity=".8"></path>
    <path d="M518 318C528 328 531 346 527 364C522 380 512 390 502 393C514 384 520 368 521 350C521.500 338 520 327 518 318Z" fill="#8aa32e" opacity=".5"></path>
  </g>
  <g id="cherries">
    <path d="M634 297.500C633.500 295 640.500 295 640.300 297.500C640 300.500 640 303 641 306C648.500 319 658.500 341 667.500 371C668.500 375 662 376.500 661 373C654.500 347 646 326 637.800 311C631.500 323 625 340 621.500 355.500L616 354C619.500 337 626.500 318 634.500 305.500C635 303 634.500 300.500 634 297.500Z" fill="#c9c56e" stroke="#4d4b1c" stroke-width="1.300" stroke-linejoin="round"></path>
    <path d="M582.300 376C582 362 593 350 607 349.500C616 349 622 352 627 355.500C632 359 635.500 367 635.300 376C635 390 624 402 609 402.300C594 402.500 582.500 391 582.300 376Z" fill="url(#gChL)" stroke="currentColor" stroke-width="1.700"></path>
    <path d="M635 378C634.500 365 645 355.500 658 355C664 354.800 668 356.500 672 355.500C678 354.500 683 357 686 362C688.500 366.500 689.500 372 689.300 378C689 392 677 402.300 662 402.500C647 402.700 635.500 392 635 378Z" fill="url(#gChR)" stroke="currentColor" stroke-width="1.700"></path>
    <path d="M637 298C638 303 639 306 641 309.500C649 324 658 346 664.800 371" fill="none" stroke="#4d4b1c" stroke-width="5.400"></path>
    <path d="M637 298C638 303 639 306 641 309.500C649 324 658 346 664.800 371" fill="none" stroke="#c9c56e" stroke-width="3.200"></path>
    <circle cx="665" cy="372.500" r="3.200" fill="#a9b04e"></circle>
    <g fill="#fff"><path d="M625.500 359.500C631 365 633.500 372 632 379C630.500 381 628 380 627.500 378C629 372 628 366 625.500 359.500Z"></path><path d="M650 360.500C645.500 367 643.500 375 645 382C646 384 648 384.500 649.500 383.500C647 376 648 368 650 360.500Z"></path><path d="M589 380.500C590 387 592 391.500 595.500 394.500C594 390 593.500 385.500 597 381.500C594 380 591 380 589 380.500Z"></path><path d="M675.500 365C678 368 678.500 371 677.500 374C676 371 675.500 368 675.500 365Z" opacity=".9"></path></g>
  </g>
  <g id="raspO" fill="#fff" stroke="#fff" stroke-width="3.400" stroke-linejoin="round"><path d="M768.600 327.800C771 322 774 318.500 777 315L776.500 312.500L779.500 312C782 308.500 785 306 787.500 303.500L787.500 301L790.500 301C793.500 298.500 796.500 296.500 799.700 294.700C799.500 297.500 800.800 299 800.300 301.500L802.500 302.500C802.300 305 803.800 307 803.500 309.500L805.800 311C805.300 314 805.800 316.500 804.800 319.500L806 322C804.800 324.500 803.300 327 801.600 329.700C804.500 327.800 807 328.600 809.500 327.300L811.500 329C813.500 328.300 815.300 328.400 817.200 328.700C815.500 330.500 816.300 333 815 335L816.300 337.500C814.800 339.500 814.800 341.500 813.300 343.300L813.500 346C811 348 810 350.500 807.500 352.500L806.800 355C804.500 356.300 802 357.500 799.700 358.900L778.300 345Z"></path><path d="M764.700 329.700C769 330 772 332 774 335C778 335 781 337 783 340C787 340 790 342 791.500 345C795 346 797.500 348.500 797.800 352C800 356 799 360 796 363C796.500 367 794.500 371 791 373C790.500 378 788 381.500 784 383C782.500 387 779.500 390 775.500 391C773 394.500 769.500 396.500 765.500 396.500C762 399.500 757.500 401.500 753 401.500C749 402.500 745 400.500 743 397C739.500 395 737.500 391 738 387C735.500 384 735 380 736.500 376.500C735.500 372.500 736.500 368.500 739 365.500C738.500 361 740 357.500 743 355C743.500 351 746 347.500 749.500 346C750.500 342 753.500 339 757 338C758 334 761 330.500 764.700 329.700Z"></path></g>
  <g id="raspberry">
    <path d="M768.600 327.800C771 322 774 318.500 777 315L776.500 312.500L779.500 312C782 308.500 785 306 787.500 303.500L787.500 301L790.500 301C793.500 298.500 796.500 296.500 799.700 294.700C799.500 297.500 800.800 299 800.300 301.500L802.500 302.500C802.300 305 803.800 307 803.500 309.500L805.800 311C805.300 314 805.800 316.500 804.800 319.500L806 322C804.800 324.500 803.300 327 801.600 329.700C804.500 327.800 807 328.600 809.500 327.300L811.500 329C813.500 328.300 815.300 328.400 817.200 328.700C815.500 330.500 816.300 333 815 335L816.300 337.500C814.800 339.500 814.800 341.500 813.300 343.300L813.500 346C811 348 810 350.500 807.500 352.500L806.800 355C804.500 356.300 802 357.500 799.700 358.900L778.300 345Z" fill="url(#gLeaf)" stroke="#0b3f1d" stroke-width="1" stroke-linejoin="round"></path>
    <path d="M780 340C786 325 793 310 799 297M784 343C795 338 806 333 815 329.500" stroke="#0c4a22" stroke-width=".8" fill="none"></path>
    <path d="M764.700 329.700C769 330 772 332 774 335C778 335 781 337 783 340C787 340 790 342 791.500 345C795 346 797.500 348.500 797.800 352C800 356 799 360 796 363C796.500 367 794.500 371 791 373C790.500 378 788 381.500 784 383C782.500 387 779.500 390 775.500 391C773 394.500 769.500 396.500 765.500 396.500C762 399.500 757.500 401.500 753 401.500C749 402.500 745 400.500 743 397C739.500 395 737.500 391 738 387C735.500 384 735 380 736.500 376.500C735.500 372.500 736.500 368.500 739 365.500C738.500 361 740 357.500 743 355C743.500 351 746 347.500 749.500 346C750.500 342 753.500 339 757 338C758 334 761 330.500 764.700 329.700Z" fill="#e0253f" stroke="#7d1525" stroke-width="1.300" stroke-linejoin="round"></path>
    <g fill="#ee3a52" stroke="#c01a33" stroke-width=".6">
      <circle cx="765" cy="338" r="5"></circle><circle cx="775" cy="344" r="5"></circle><circle cx="786" cy="351" r="5"></circle><circle cx="755" cy="347" r="5"></circle><circle cx="766" cy="352" r="5.200"></circle><circle cx="778" cy="358" r="5.200"></circle><circle cx="790" cy="363" r="4.500"></circle><circle cx="747" cy="358" r="5"></circle><circle cx="758" cy="362" r="5.200"></circle><circle cx="770" cy="367" r="5.200"></circle><circle cx="782" cy="372" r="4.800"></circle><circle cx="743" cy="370" r="5"></circle><circle cx="753" cy="374" r="5.200"></circle><circle cx="764" cy="379" r="5.200"></circle><circle cx="775" cy="383" r="4.800"></circle><circle cx="743" cy="383" r="5"></circle><circle cx="754" cy="387" r="5.200"></circle><circle cx="765" cy="391" r="4.500"></circle><circle cx="748" cy="394" r="5"></circle>
    </g>
    <g fill="#d11f3a"><circle cx="765" cy="338" r="1.300"></circle><circle cx="775" cy="344" r="1.300"></circle><circle cx="786" cy="351" r="1.300"></circle><circle cx="755" cy="347" r="1.300"></circle><circle cx="766" cy="352" r="1.300"></circle><circle cx="778" cy="358" r="1.300"></circle><circle cx="747" cy="358" r="1.300"></circle><circle cx="758" cy="362" r="1.300"></circle><circle cx="770" cy="367" r="1.300"></circle><circle cx="782" cy="372" r="1.300"></circle><circle cx="743" cy="370" r="1.300"></circle><circle cx="753" cy="374" r="1.300"></circle><circle cx="764" cy="379" r="1.300"></circle><circle cx="775" cy="383" r="1.300"></circle><circle cx="743" cy="383" r="1.300"></circle><circle cx="754" cy="387" r="1.300"></circle><circle cx="765" cy="391" r="1.300"></circle><circle cx="748" cy="394" r="1.300"></circle></g>
  </g>
</defs>

<clipPath id="cpPaper"><path d="M873.600 93.200L1115 56.700L1165.600 383.600L1118.200 413.400L927.200 441.700Z"></path></clipPath>
<!-- left artboard art -->
<radialGradient id="gArt" cx="0.5" cy="0.5" r="0.75"><stop offset="0" stop-color="#f8f8f8"></stop><stop offset="0.6" stop-color="#f0f0f0"></stop><stop offset="1" stop-color="#e2e2e2"></stop></radialGradient>
<rect x="86" y="263" width="210" height="316" fill="url(#gArt)"></rect>
<clipPath id="cpArt"><rect x="86" y="263" width="210" height="316"></rect></clipPath>
<g clip-path="url(#cpArt)" fill="none" stroke-linecap="round">
  <g stroke="#fff" opacity=".75">
    <path d="M296 300C280 305 270 325 282 338C290 346 300 338 296 328" stroke-width="3"></path>
    <path d="M300 318C285 322 282 345 296 352" stroke-width="2"></path>
    <path d="M296 520C275 520 262 540 272 556C280 568 298 562 296 548" stroke-width="3"></path>
    <path d="M300 536C288 538 284 552 296 556" stroke-width="2"></path>
    <path d="M150 420C160 380 200 360 240 380C260 392 270 420 260 450" stroke-width="2"></path>
    <path d="M100 470C130 440 180 450 200 480" stroke-width="1.500"></path>
    <path d="M90 540C110 520 140 520 160 540" stroke-width="2"></path>
    <path d="M170 300C190 340 210 350 240 340" stroke-width="1.500"></path>
  </g>
  <g id="fan">
    <path d="M224 392C212 378 198 354 184 328C176 316 158 318 155.500 334C154 348 168 354 175 346C180 339 174 331 168 333C163 335 164 342 169 342" stroke="var(--a)" stroke-width="1.600"></path>
    <path d="M224 390C214 362 204 338 191 325C178 312 158 316 152 332" stroke="var(--a)" stroke-width="1"></path>
    <path d="M224.500 391C221 378 216 357 218.500 345C220 336 210 332 204 338C199 344 204 351 210 349C214 347 213 341 209 342" stroke="var(--c)" stroke-width="1.400"></path>
    <path d="M225 390C228 375 230 358 238 350C243 345 246 340 243 338C238 338 232 350 229 365C227 375 226 384 225 390Z" stroke="var(--a)" stroke-width="1" fill="var(--a)"></path>
    <path d="M224.500 390C223 370 222 345 230 335C236 326 246 330 244 337C242 342 236 341 236 336" stroke="var(--c)" stroke-width="1.200"></path>
    <path d="M224.500 389C222 362 218 334 226 319C232 310 248 314 257 311C266 308 267 297 259 294C252 292 246 297 248 303C250 307 256 306 256 302" stroke="var(--c)" stroke-width="1.500"></path>
    <path d="M245 317C256 318 270 310 273 297C275 288 272 281 269 276" stroke="var(--c)" stroke-width="1.200"></path>
    <path d="M240 322C252 324 262 320 268 314" stroke="var(--c)" stroke-width=".8"></path>
    <path d="M221.500 394C200 388 188 368 172 364C158 361 146 372 146 387C146 402 160 416 174 415C186 414 184 398 176 392C171 388 165 390 164 395" stroke="var(--b)" stroke-width="1.700"></path>
    <path d="M219 394C200 392 186 372 172 369C160 367 151 376 151 388" stroke="var(--b)" stroke-width=".9"></path>
    <path d="M94 394C104 386 122 384 139 392C152 398 160 414 176 420" stroke="var(--a)" stroke-width="1.300"></path>
    <path d="M100 398C112 392 128 392 140 398" stroke="var(--a)" stroke-width=".8"></path>
    <path d="M226.500 394C232 400 236 408 231 414C227 419 220 417 221 412C222 409 226 409 226 412" stroke="var(--c)" stroke-width="1.300"></path>
    <path d="M217 396C214 406 210 416 202 415C195 414 193 405 198 401C202 398 206 402 203 405" stroke="var(--c)" stroke-width="1.300"></path>
    <path d="M228 396C236 402 240 412 236 420" stroke="var(--c)" stroke-width="1"></path>
    <path d="M120 366L135 378M128 362L136 378M112 372L134 379" stroke="var(--c)" stroke-width=".8"></path>
    <path d="M113 362C116 360 119 362 118 365C116 368 112 366 113 362ZM150 376C153 374 156 376 155 379" stroke="var(--c)" stroke-width="1" fill="var(--c)"></path>
    <path d="M172 374C176 370 180 372 179 377L172 380Z" stroke="var(--c)" stroke-width=".8" fill="var(--c)"></path>
    <path d="M249 341C252 339 256 341 254 345L248 345Z" stroke="var(--c)" stroke-width=".8" fill="var(--c)"></path>
    <path d="M272 311C275 309 278 311 276 315L271 315Z" stroke="var(--c)" stroke-width=".8" fill="var(--c)"></path>
    <path d="M96 392C94 386 98 380 106 380C102 384 104 388 110 388" stroke="var(--c)" stroke-width=".8"></path>
    <path d="M232 382C238 374 246 374 250 378C244 378 240 382 238 386" stroke="var(--c)" stroke-width=".8"></path>
    <g transform="translate(2.300 -1.400)">    <path d="M224 392C212 378 198 354 184 328C176 316 158 318 155.500 334C154 348 168 354 175 346C180 339 174 331 168 333C163 335 164 342 169 342" stroke="var(--a)" stroke-width=".7"></path>
    <path d="M224.500 391C221 378 216 357 218.500 345C220 336 210 332 204 338C199 344 204 351 210 349C214 347 213 341 209 342" stroke="var(--c)" stroke-width=".7"></path>
    <path d="M224.500 390C223 370 222 345 230 335C236 326 246 330 244 337C242 342 236 341 236 336" stroke="var(--c)" stroke-width=".7"></path>
    <path d="M224.500 389C222 362 218 334 226 319C232 310 248 314 257 311C266 308 267 297 259 294C252 292 246 297 248 303C250 307 256 306 256 302" stroke="var(--c)" stroke-width=".7"></path>
    <path d="M245 317C256 318 270 310 273 297C275 288 272 281 269 276" stroke="var(--c)" stroke-width=".7"></path>
    <path d="M221.500 394C200 388 188 368 172 364C158 361 146 372 146 387C146 402 160 416 174 415C186 414 184 398 176 392C171 388 165 390 164 395" stroke="var(--b)" stroke-width=".7"></path>
    <path d="M94 394C104 386 122 384 139 392C152 398 160 414 176 420" stroke="var(--a)" stroke-width=".7"></path>
    <path d="M226.500 394C232 400 236 408 231 414C227 419 220 417 221 412C222 409 226 409 226 412" stroke="var(--c)" stroke-width=".7"></path>
    <path d="M217 396C214 406 210 416 202 415C195 414 193 405 198 401C202 398 206 402 203 405" stroke="var(--c)" stroke-width=".7"></path>
    </g>
    <g transform="translate(-2 1.800)" opacity=".8">    <path d="M224 392C212 378 198 354 184 328C176 316 158 318 155.500 334C154 348 168 354 175 346C180 339 174 331 168 333C163 335 164 342 169 342" stroke="var(--a)" stroke-width=".55"></path>
    <path d="M224.500 391C221 378 216 357 218.500 345C220 336 210 332 204 338C199 344 204 351 210 349C214 347 213 341 209 342" stroke="var(--c)" stroke-width=".55"></path>
    <path d="M224.500 390C223 370 222 345 230 335C236 326 246 330 244 337C242 342 236 341 236 336" stroke="var(--c)" stroke-width=".55"></path>
    <path d="M224.500 389C222 362 218 334 226 319C232 310 248 314 257 311C266 308 267 297 259 294C252 292 246 297 248 303C250 307 256 306 256 302" stroke="var(--c)" stroke-width=".55"></path>
    <path d="M245 317C256 318 270 310 273 297C275 288 272 281 269 276" stroke="var(--c)" stroke-width=".55"></path>
    <path d="M221.500 394C200 388 188 368 172 364C158 361 146 372 146 387C146 402 160 416 174 415C186 414 184 398 176 392C171 388 165 390 164 395" stroke="var(--b)" stroke-width=".55"></path>
    <path d="M94 394C104 386 122 384 139 392C152 398 160 414 176 420" stroke="var(--a)" stroke-width=".55"></path>
    <path d="M226.500 394C232 400 236 408 231 414C227 419 220 417 221 412C222 409 226 409 226 412" stroke="var(--c)" stroke-width=".55"></path>
    <path d="M217 396C214 406 210 416 202 415C195 414 193 405 198 401C202 398 206 402 203 405" stroke="var(--c)" stroke-width=".55"></path>
    </g>
  </g>
  <g id="scurve">
    <path d="M92 319C100 326 114 334 128 332C142 330 147 316 142 303C137 292 122 291 118 285C115 279 122 274 130 276C140 279 148 296 160 288C168 282 166 272 160 269" stroke="var(--a)" stroke-width="1.600"></path>
    <path d="M98 320C110 328 126 329 134 320C140 312 138 302 130 297" stroke="var(--a)" stroke-width=".9"></path>
    <path d="M122 284C128 280 138 284 144 292" stroke="var(--a)" stroke-width=".8"></path>
    <path d="M150 300L160 318M156 300L162 316M148 306L158 320" stroke="var(--c)" stroke-width=".8"></path>
    <path d="M168 308C171 306 174 308 172 312L167 312Z" stroke="var(--c)" stroke-width=".8" fill="var(--c)"></path>
    <path d="M146 269L156 274M148 272L154 278M150 266L158 270" stroke="var(--c)" stroke-width="1"></path>
    <path d="M166 290C172 286 176 280 174 276C178 282 178 290 172 296" stroke="var(--c)" stroke-width=".8"></path>
    <g transform="translate(2.300 -1.400)">    <path d="M92 319C100 326 114 334 128 332C142 330 147 316 142 303C137 292 122 291 118 285C115 279 122 274 130 276C140 279 148 296 160 288C168 282 166 272 160 269" stroke="var(--a)" stroke-width=".7"></path>
    </g>
    <g transform="translate(-2 1.800)" opacity=".8">    <path d="M92 319C100 326 114 334 128 332C142 330 147 316 142 303C137 292 122 291 118 285C115 279 122 274 130 276C140 279 148 296 160 288C168 282 166 272 160 269" stroke="var(--a)" stroke-width=".55"></path>
    </g>
  </g>
</g>
<g clip-path="url(#cpArt)" fill="none" stroke-linecap="round" opacity=".88">
  <use href="#fan" style="--a:#5c4339;--b:#5c4339;--c:#5c4339"></use>
  <use href="#scurve" style="--a:#5c4339;--b:#5c4339;--c:#5c4339"></use>
  <use href="#fan" transform="translate(11 137)" style="--a:#3b9fa6;--b:#b5157a;--c:#5c3a3a"></use>
  <use href="#scurve" transform="translate(-8 164)" style="--a:#4a9aa8;--b:#b5157a;--c:#7a4a78"></use>
  <!-- small colourful motif right -->
  <g stroke-width="1.200">
    <path d="M268 345C272 352 276 360 274 368C272 376 262 374 262 367C262 362 268 362 268 366" stroke="#c0187c"></path>
    <path d="M270 350C280 356 286 368 282 380C280 388 272 390 268 386" stroke="#3b9fa6"></path>
    <path d="M262 372C258 380 262 392 272 398C280 402 288 398 290 392" stroke="#6a62b0"></path>
    <path d="M276 384C280 390 286 390 288 384" stroke="#c0187c" stroke-width="1.600"></path>
    <path d="M258 388L266 380" stroke="#6ab04a" stroke-width="1"></path>
    <path d="M280 418C288 424 290 434 284 442" stroke="#c0187c"></path>
    <path d="M270 425C278 428 282 436 278 444" stroke="#3b9fa6"></path>
  </g>
  <path d="M191.800 438C190 435.500 187 435 185 436.500C183 438 182.500 440 181 439.500C182 441.500 186 441.500 189 440C190.500 439.300 191.300 439 191.800 439C192.300 439 193.100 439.300 194.600 440C197.600 441.500 201.600 441.500 202.600 439.500C201.100 440 200.600 438 198.600 436.500C196.600 435 193.600 435.500 191.800 438Z" fill="#e8409b" stroke="none"></path>
</g>
<text x="165" y="448.500" font-family="Liberation Serif" font-style="italic" font-size="9" fill="#1a1a1a" textLength="56" lengthAdjust="spacingAndGlyphs">PinkMoustache</text>
<text x="179" y="453.500" font-family="Liberation Serif" font-weight="bold" font-size="2.800" fill="#333" textLength="27" lengthAdjust="spacing">VECTOR STORIES</text>
<g clip-path="url(#cpPaper)"><path d="M878.4 97.9L1116.0 63.3M879.4 104.5L1117.0 69.9M880.4 111.1L1118.1 76.5M881.4 117.7L1119.1 83.1M882.4 124.3L1120.1 89.7M883.4 130.9L1121.1 96.3M884.4 137.5L1122.2 102.9M885.4 144.1L1123.2 109.5M886.4 150.7L1124.2 116.1M887.4 157.3L1125.2 122.7M888.4 163.9L1126.2 129.3M889.4 170.5L1127.3 135.9M890.4 177.1L1128.3 142.5M891.3 183.8L1129.3 149.1M892.3 190.4L1130.3 155.7M893.3 197.0L1131.3 162.3M894.3 203.6L1132.4 168.9M895.3 210.2L1133.4 175.5M896.3 216.8L1134.4 182.1M897.3 223.4L1135.4 188.7M898.3 230.0L1136.5 195.3M899.3 236.6L1137.5 201.9M900.3 243.2L1138.5 208.5M901.3 249.8L1139.5 215.1M902.3 256.4L1140.5 221.7M903.3 263.0L1141.6 228.3M904.3 269.6L1142.6 234.9M905.3 276.2L1143.6 241.5M906.3 282.8L1144.6 248.1M907.3 289.4L1145.6 254.7M908.3 296.0L1146.7 261.3M909.3 302.6L1147.7 267.9M910.3 309.2L1148.7 274.5M911.3 315.8L1149.7 281.1M912.3 322.4L1150.8 287.7M913.3 329.0L1151.8 294.3M914.3 335.6L1152.8 300.9M915.3 342.2L1153.8 307.5M916.3 348.8L1154.8 314.1M917.2 355.5L1155.9 320.7M918.2 362.1L1156.9 327.3M919.2 368.7L1157.9 333.9M920.2 375.3L1158.9 340.5M921.2 381.9L1159.9 347.1M922.2 388.5L1161.0 353.7M923.2 395.1L1162.0 360.3M924.2 401.7L1163.0 366.9M925.2 408.3L1164.0 373.5M926.2 414.9L1165.1 380.1M927.2 421.5L1166.1 386.7M928.2 428.1L1167.1 393.3M929.2 434.7L1168.1 399.9" stroke="#f2f2f2" stroke-width=".7" fill="none"></path>
<path d="M903 86L955 438" stroke="#ececec" stroke-width=".7"></path></g>
<!-- big fruits -->
<g style="color:#111">
  <use href="#orange" style="color:#3a2410"></use>
  <use href="#tomato"></use><use href="#coconut" style="color:#3b2521"></use><use href="#strawberry" style="color:#3a1a14"></use>
  <use href="#lemon"></use><use href="#appleR" style="color:#2a1410"></use><use href="#kiwi" style="color:#4f403e"></use>
  <use href="#appleG"></use><use href="#cherries"></use><use href="#raspberry"></use>
</g>

<!-- paper -->
<path d="M873.600 93.200L1115 56.700L1165.600 383.600L1118.200 413.400L927.200 441.700" fill="none" stroke="#2a2a2a" stroke-width=".9"></path>
<path d="M873.6 93.2C878.0 91.6 879.0 97.7 874.3 97.6C878.7 96.0 879.6 102.1 874.9 101.9C879.4 100.3 880.3 106.4 875.6 106.3C880.0 104.7 881.0 110.8 876.3 110.6C880.7 109.1 881.6 115.2 877.0 115.0C881.4 113.4 882.3 119.5 877.6 119.3C882.0 117.8 883.0 123.9 878.3 123.7C882.7 122.1 883.6 128.2 879.0 128.1C883.4 126.5 884.3 132.6 879.6 132.4C884.0 130.8 885.0 136.9 880.3 136.8C884.7 135.2 885.7 141.3 881.0 141.1C885.4 139.5 886.3 145.6 881.6 145.5C886.1 143.9 887.0 150.0 882.3 149.8C886.7 148.3 887.7 154.4 883.0 154.2C887.4 152.6 888.3 158.7 883.6 158.5C888.1 157.0 889.0 163.1 884.3 162.9C888.7 161.3 889.7 167.4 885.0 167.3C889.4 165.7 890.3 171.8 885.7 171.6C890.1 170.0 891.0 176.1 886.3 176.0C890.7 174.4 891.7 180.5 887.0 180.3C891.4 178.8 892.4 184.9 887.7 184.7C892.1 183.1 893.0 189.2 888.3 189.0C892.8 187.5 893.7 193.6 889.0 193.4C893.4 191.8 894.4 197.9 889.7 197.8C894.1 196.2 895.0 202.3 890.4 202.1C894.8 200.5 895.7 206.6 891.0 206.5C895.4 204.9 896.4 211.0 891.7 210.8C896.1 209.2 897.0 215.3 892.4 215.2C896.8 213.6 897.7 219.7 893.0 219.5C897.4 218.0 898.4 224.1 893.7 223.9C898.1 222.3 899.1 228.4 894.4 228.2C898.8 226.7 899.7 232.8 895.0 232.6C899.5 231.0 900.4 237.1 895.7 237.0C900.1 235.4 901.1 241.5 896.4 241.3C900.8 239.7 901.7 245.8 897.1 245.7C901.5 244.1 902.4 250.2 897.7 250.0C902.1 248.5 903.1 254.6 898.4 254.4C902.8 252.8 903.7 258.9 899.1 258.7C903.5 257.2 904.4 263.3 899.7 263.1C904.1 261.5 905.1 267.6 900.4 267.4C904.8 265.9 905.8 272.0 901.1 271.8C905.5 270.2 906.4 276.3 901.7 276.2C906.2 274.6 907.1 280.7 902.4 280.5C906.8 278.9 907.8 285.0 903.1 284.9C907.5 283.3 908.4 289.4 903.8 289.2C908.2 287.7 909.1 293.8 904.4 293.6C908.8 292.0 909.8 298.1 905.1 297.9C909.5 296.4 910.4 302.5 905.8 302.3C910.2 300.7 911.1 306.8 906.4 306.7C910.8 305.1 911.8 311.2 907.1 311.0C911.5 309.4 912.5 315.5 907.8 315.4C912.2 313.8 913.1 319.9 908.4 319.7C912.9 318.2 913.8 324.3 909.1 324.1C913.5 322.5 914.5 328.6 909.8 328.4C914.2 326.9 915.1 333.0 910.5 332.8C914.9 331.2 915.8 337.3 911.1 337.2C915.5 335.6 916.5 341.7 911.8 341.5C916.2 339.9 917.1 346.0 912.5 345.9C916.9 344.3 917.8 350.4 913.1 350.2C917.5 348.6 918.5 354.7 913.8 354.6C918.2 353.0 919.2 359.1 914.5 358.9C918.9 357.4 919.8 363.5 915.1 363.3C919.6 361.7 920.5 367.8 915.8 367.6C920.2 366.1 921.2 372.2 916.5 372.0C920.9 370.4 921.8 376.5 917.2 376.4C921.6 374.8 922.5 380.9 917.8 380.7C922.2 379.1 923.2 385.2 918.5 385.1C922.9 383.5 923.8 389.6 919.2 389.4C923.6 387.9 924.5 394.0 919.8 393.8C924.2 392.2 925.2 398.3 920.5 398.1C924.9 396.6 925.9 402.7 921.2 402.5C925.6 400.9 926.5 407.0 921.8 406.9C926.3 405.3 927.2 411.4 922.5 411.2C926.9 409.6 927.9 415.7 923.2 415.6C927.6 414.0 928.5 420.1 923.9 419.9C928.3 418.3 929.2 424.4 924.5 424.3C928.9 422.7 929.9 428.8 925.2 428.6C929.6 427.1 930.5 433.2 925.9 433.0C930.3 431.4 931.2 437.5 926.5 437.3C930.9 435.8 931.9 441.9 927.2 441.7" fill="none" stroke="#333" stroke-width=".65"></path>
<linearGradient id="gCurl" x1="0" y1="0" x2="1" y2="1"><stop offset="0" stop-color="#d4d4d4"></stop><stop offset="1" stop-color="#f4f4f4"></stop></linearGradient>
<path d="M1118.200 413.400C1130 404 1138 390 1144.200 377.400C1149 383 1157 385 1165.600 383.600Z" fill="url(#gCurl)"></path>
<!-- guides -->
<g stroke="#222" stroke-width=".7" stroke-dasharray="2.500 1.500" opacity=".55"><path d="M514.500 57V682M525.500 57V682M1077.500 57V682M1089.500 57V682"></path></g>
<!-- logo -->
<path d="M845.500 383C843 379.500 838 378.500 834.500 381C831.500 383 830.500 386 828.500 385C827.500 384.500 828 383 829 382.500C827 383 826.500 386 828.500 387.500C832 390 838 389 842 386.500C843.500 385.500 844.800 385 845.500 385C846.200 385 847.500 385.500 849 386.500C853 389 859 390 862.500 387.500C864.500 386 864 383 862 382.500C863 383 863.500 384.500 862.500 385C860.500 386 859.500 383 856.500 381C853 378.500 848 379.500 845.500 383Z" fill="#e8409b"></path>
<text x="800.500" y="408" font-family="Liberation Serif" font-style="italic" font-size="16" fill="#111" stroke="#111" stroke-width=".25" textLength="89.500" lengthAdjust="spacingAndGlyphs">PinkMoustache</text>
<text x="825" y="415.500" font-family="Liberation Serif" font-weight="bold" font-size="4" fill="#222" textLength="41" lengthAdjust="spacing">VECTOR STORIES</text>
<!-- cursor -->
<path d="M824 293V304.500L826.700 302L828.500 306L830 305.300L828.200 301.500H831.800Z" fill="#fff" stroke="#111" stroke-width=".9" stroke-linejoin="round"></path>
<!-- small fruits -->
<g style="color:#fff">
<use href="#tomato" transform="translate(168.38 442.16) scale(0.610)"></use>
<use href="#lemon" transform="translate(249.42 372.78) scale(0.610)"></use>
<use href="#appleG" transform="translate(330.57 303.60) scale(0.610)"></use>
<use href="#coconut" transform="translate(324.85 448.08) scale(0.610)"></use>
<use href="#appleR" transform="translate(380.58 379.42) scale(0.610)"></use>
<use href="#cherries" transform="translate(462.40 302.21) scale(0.610)"></use>
<use href="#strawberry" transform="translate(459.43 447.05) scale(0.610)"></use>
<use href="#raspO" transform="translate(516.25 303.13) scale(0.610)"></use><use href="#raspberry" transform="translate(516.25 303.13) scale(0.610)"></use>
<use href="#kiwi" transform="translate(589.92 374.60) scale(0.610)"></use>
</g>
</svg>
</div>
<div id="vscroll">
  <div class="abs" style="left:3px;top:5px;border:3.5px solid transparent;border-bottom:5px solid #f0f0f0;border-top:0"></div>
  <div class="abs" style="left:2px;top:308px;width:10px;height:9px;background:#a6a6a6"></div>
  <div class="abs" style="left:3px;top:617px;border:3.5px solid transparent;border-top:5px solid #f0f0f0;border-bottom:0"></div>
</div>
<div id="status">
  <div class="abs" style="left:0;top:0;width:282px;height:12px;background:#454545;border-top:1px solid #333"></div>
  <div class="abs" style="left:1214px;top:0;width:12px;height:12px;background:#4a4a4a"></div>
  <div class="abs" style="left:3px;top:1px;width:28px;height:10px;background:#8c8c8c;border:1px solid #3a3a3a"></div>
  <div class="t" style="left:6px;top:2.5px;font-size:8.500px;color:#000;transform:scaleX(0.644)">145%</div>
  <div class="abs" style="left:31px;top:1px;width:9px;height:10px;background:#5f5f5f;border:1px solid #3a3a3a"></div>
  <div class="abs" style="left:33px;top:5px;border:2.500px solid transparent;border-top:2.5px solid #eee;border-bottom:0"></div>
  <div class="abs" style="left:47px;top:3px;width:1px;height:6px;background:#6a6a6a"></div><div class="abs" style="left:48px;top:3px;border:3px solid transparent;border-right:4px solid #6a6a6a;border-left:0"></div>
  <div class="abs" style="left:60px;top:3px;border:3px solid transparent;border-right:4px solid #6a6a6a;border-left:0"></div>
  <div class="abs" style="left:70px;top:1px;width:28px;height:10px;background:#8c8c8c;border:1px solid #3a3a3a"></div>
  <div class="t" style="left:73px;top:2.5px;font-size:8.500px;color:#000">1</div>
  <div class="abs" style="left:98px;top:1px;width:9px;height:10px;background:#5f5f5f;border:1px solid #3a3a3a"></div>
  <div class="abs" style="left:100px;top:5px;border:2.500px solid transparent;border-top:2.5px solid #eee;border-bottom:0"></div>
  <div class="abs" style="left:114px;top:3px;border:3px solid transparent;border-left:4px solid #eee;border-right:0"></div>
  <div class="abs" style="left:124px;top:3px;border:3px solid transparent;border-left:4px solid #eee;border-right:0"></div><div class="abs" style="left:128px;top:3px;width:1px;height:6px;background:#eee"></div>
  <div class="abs" style="left:136px;top:1px;width:1px;height:12px;background:#333"></div>
  <div class="t" style="left:189.500px;top:2px;font-size:8.500px;color:#e4e4e4;transform:scaleX(0.715)">Selection</div>
  <div class="abs" style="left:274px;top:3px;border:3px solid transparent;border-left:4px solid #eee;border-right:0"></div>
  <div class="abs" style="left:285px;top:3px;border:3px solid transparent;border-right:4px solid #eee;border-left:0"></div>
  <div class="abs" style="left:733px;top:1px;width:10px;height:10px;background:#a6a6a6"></div>
  <div class="abs" style="left:1205px;top:3px;border:3px solid transparent;border-left:4px solid #eee;border-right:0"></div>
</div>
<div id="rpanel">
  <div class="abs" style="left:0;top:0;width:25px;height:8px;background:#2c2c2c"></div>
  <svg class="abs" style="left:16px;top:1.500px" width="7" height="5" viewBox="0 0 7 5"><path d="M3 0L0 2.500L3 5ZM6.500 0L3.500 2.500L6.500 5Z" fill="#c8c8c8"></path></svg>
  <svg class="abs" style="left:0;top:8px" width="25" height="320" viewBox="1255 52 25 320" fill="none">
    <g fill="#2e2e2e"><rect x="1255" y="96" width="25" height="1"></rect><rect x="1255" y="159" width="25" height="1"></rect><rect x="1255" y="225" width="25" height="1"></rect><rect x="1255" y="270" width="25" height="1"></rect><rect x="1255" y="316" width="25" height="1"></rect><rect x="1255" y="364" width="25" height="1"></rect></g>
    <g stroke="#2c2c2c" stroke-width="1" stroke-dasharray="1 1"><path d="M1261 57.500H1274M1261 102.500H1274M1261 165H1274M1261 231H1274M1261 276H1274M1261 322.500H1274"></path></g>
    <!-- color palette -->
    <path d="M1260.500 69.500C1260.500 66 1264 64 1268 64C1272 64 1274.500 66 1274.500 68.500C1274.500 71 1271.500 70.500 1270.500 71.500C1269.500 72.500 1271 74 1268.500 74.500C1264 75 1260.500 73 1260.500 69.500Z" fill="#d0d0d0"></path>
    <g fill="#474747"><circle cx="1264" cy="68" r="1"></circle><circle cx="1267" cy="66.500" r="1"></circle><circle cx="1270.500" cy="67" r="1"></circle><circle cx="1264.500" cy="71.500" r="1"></circle></g>
    <!-- color guide -->
    <path d="M1261.500 92V80.500C1268 81 1273 86 1273.500 92Z" fill="#d0d0d0"></path><path d="M1261.500 92L1269 83.500M1261.500 92L1272.500 88" stroke="#474747" stroke-width=".8"></path>
    <!-- swatches -->
    <rect x="1261" y="109" width="13" height="9.500" fill="#d0d0d0"></rect><path d="M1261 112H1274M1261 115.500H1274M1265.300 109V118.500M1269.600 109V118.500" stroke="#474747" stroke-width=".8"></path><rect x="1265.700" y="112.400" width="3.500" height="2.700" fill="#474747"></rect>
    <!-- brushes -->
    <path d="M1263 137V130H1272V137Z" fill="#d0d0d0"></path><path d="M1264.500 130V125.500M1267.500 130V123.500M1270.500 130V126" stroke="#d0d0d0" stroke-width="1.400"></path>
    <!-- symbols (club) -->
    <circle cx="1267.500" cy="145" r="2.800" fill="#d0d0d0"></circle><circle cx="1264.300" cy="149.300" r="2.800" fill="#d0d0d0"></circle><circle cx="1270.700" cy="149.300" r="2.800" fill="#d0d0d0"></circle><path d="M1267.500 148L1265.500 154.500H1269.500Z" fill="#d0d0d0"></path>
    <!-- gradient -->
    <linearGradient id="rg" x1="0" x2="1"><stop offset="0" stop-color="#3a3a3a"></stop><stop offset="1" stop-color="#e8e8e8"></stop></linearGradient>
    <rect x="1261.500" y="172.500" width="12" height="9.500" fill="url(#rg)" stroke="#d0d0d0" stroke-width="1"></rect>
    <!-- stroke -->
    <path d="M1261 192.500H1274" stroke="#d0d0d0" stroke-width="1"></path><path d="M1261 196.500H1274" stroke="#d0d0d0" stroke-width="1.600"></path><path d="M1261 201H1274" stroke="#d0d0d0" stroke-width="2.200"></path>
    <!-- transparency -->
    <circle cx="1265.500" cy="214.500" r="4.300" fill="#8a8a8a" stroke="#d0d0d0" stroke-width="1"></circle><circle cx="1269.500" cy="217.500" r="4.300" fill="#b0b0b0" stroke="#d0d0d0" stroke-width="1" fill-opacity=".8"></circle>
    <!-- appearance -->
    <circle cx="1267.500" cy="243.500" r="5.800" stroke="#d0d0d0" stroke-width="1" stroke-dasharray="1.200 1.200"></circle><circle cx="1267.500" cy="243.500" r="3.600" fill="#d0d0d0"></circle>
    <!-- graphic styles -->
    <rect x="1264.500" y="256" width="9" height="9" stroke="#d0d0d0" stroke-width="1"></rect><rect x="1261.500" y="261" width="6" height="6" fill="#474747" stroke="#d0d0d0" stroke-width="1"></rect><circle cx="1264.500" cy="264" r="1.500" fill="#d0d0d0"></circle>
    <!-- layers -->
    <path d="M1267.500 283L1274.500 287L1267.500 291L1260.500 287Z" fill="#d0d0d0"></path><path d="M1261 290.500L1267.500 294.500L1274 290.500" stroke="#d0d0d0" stroke-width="1.300"></path>
    <!-- artboards -->
    <rect x="1261.500" y="302" width="8" height="7" stroke="#d0d0d0" stroke-width="1.100"></rect><rect x="1265.500" y="306" width="8" height="7" stroke="#d0d0d0" stroke-width="1.100" fill="#474747"></rect>
    <!-- wheel -->
    <circle cx="1267.500" cy="335" r="4" stroke="#d0d0d0" stroke-width="1.300"></circle><circle cx="1267.500" cy="335" r="1.300" fill="#d0d0d0"></circle>
    <path d="M1267.500 328V342M1260.500 335H1274.500M1262.500 330L1272.500 340M1272.500 330L1262.500 340" stroke="#d0d0d0" stroke-width="1"></path>
    <!-- info -->
    <circle cx="1267.500" cy="353.500" r="5.500" fill="#d0d0d0"></circle><rect x="1266.700" y="352.500" width="1.800" height="4.500" fill="#474747"></rect><circle cx="1267.600" cy="350.500" r="1.100" fill="#474747"></circle>
  </svg>
</div>
<div id="taskbar">
<div class="abs" style="left:0;top:0;width:1280px;height:1px;background:#e6bf9c"></div>
<div class="abs" style="left:407px;top:0;width:39px;height:26px;background:#f1d6bc;border-left:1px solid #f8e6d4;border-right:1px solid #c89a74"></div>
<div class="abs" style="left:447px;top:0;width:42px;height:26px;background:#e0b28c;border-right:1px solid #c4946c"></div>
<div class="abs" style="left:490px;top:0;width:40px;height:26px;background:#e0b28c;border-right:1px solid #c4946c"></div>
<div class="abs" style="left:0;top:25px;width:1280px;height:1px;background:#b08a6a"></div>
<svg class="abs" style="left:0;top:0" width="1280" height="26" viewBox="0 694 1280 26">
  <!-- windows -->
  <g fill="#fff"><path d="M7 699.500L14.500 698.400V705.600H7Z"></path><path d="M15.500 698.200L25 696.800V705.600H15.500Z"></path><path d="M7 706.600H14.500V713.800L7 712.700Z"></path><path d="M15.500 706.600H25V715.400L15.500 714Z"></path></g>
  <!-- explorer -->
  <path d="M44.500 699H51L53 701H63.500V714H44.500Z" fill="#f4d77a" stroke="#d9b24a" stroke-width=".8"></path>
  <rect x="45.500" y="702" width="17" height="6" fill="#fbe9a8"></rect>
  <path d="M47 707H61V715H57V711.500H51V715H47Z" fill="#5ab0e0" stroke="#3a8ac0" stroke-width=".6"></path>
  <rect x="46" y="700" width="2" height="1" fill="#4a4"></rect><rect x="49" y="700" width="2" height="1" fill="#d44"></rect>
  <!-- paint -->
  <ellipse cx="94" cy="708" rx="9" ry="7.500" fill="#e8e4dc" stroke="#9aa4b4" stroke-width=".8" transform="rotate(-20 94 708)"></ellipse>
  <circle cx="89.500" cy="707" r="1.700" fill="#e04a3a"></circle><circle cx="93" cy="703.500" r="1.700" fill="#f0c030"></circle><circle cx="97.500" cy="704" r="1.700" fill="#4a9ae0"></circle><circle cx="92" cy="711.500" r="1.700" fill="#5ab84a"></circle><circle cx="97" cy="710" r="1.500" fill="#dba77d"></circle>
  <path d="M96 712L103 699L104.500 700L99 713Z" fill="#c8a060" stroke="#8a6a3a" stroke-width=".5"></path><path d="M103 699L104.500 696.500L105.500 698L104.500 700Z" fill="#e88a2a"></path>
  <!-- calculator -->
  <rect x="128.500" y="697.500" width="14" height="18" rx="1" fill="#d8ecf8" stroke="#6a9ac8" stroke-width="1"></rect>
  <rect x="130.500" y="699.500" width="10" height="4" fill="#a8d0f0" stroke="#5a8ab8" stroke-width=".5"></rect>
  <g fill="#7aa8d8"><rect x="130.500" y="705" width="2" height="2"></rect><rect x="133.500" y="705" width="2" height="2"></rect><rect x="136.500" y="705" width="2" height="2"></rect><rect x="139" y="705" width="1.500" height="2"></rect><rect x="130.500" y="708" width="2" height="2"></rect><rect x="133.500" y="708" width="2" height="2"></rect><rect x="136.500" y="708" width="2" height="2"></rect><rect x="139" y="708" width="1.500" height="2"></rect><rect x="130.500" y="711" width="2" height="2"></rect><rect x="133.500" y="711" width="2" height="2"></rect><rect x="136.500" y="711" width="2" height="2"></rect><rect x="139" y="711" width="1.500" height="2"></rect></g>
  <!-- chrome -->
  <circle cx="178" cy="707" r="9.500" fill="#e8e8e8"></circle>
  <path d="M178 707L169.800 702.200A9.500 9.500 0 0 1 186.200 702.200Z" fill="#db4437"></path>
  <path d="M178 707L186.200 702.200A9.500 9.500 0 0 1 178 716.500Z" fill="#f4c20d"></path>
  <path d="M178 707L178 716.500A9.500 9.500 0 0 1 169.800 702.200Z" fill="#3cba54"></path>
  <path d="M169.800 702.200A9.500 9.500 0 0 1 186.200 702.200L178 702.500Z" fill="#db4437"></path>
  <circle cx="178" cy="707" r="4.600" fill="#f4f4f4"></circle><circle cx="178" cy="707" r="3.600" fill="#4a8af4"></circle>
  <!-- steam -->
  <circle cx="218.500" cy="707" r="9.500" fill="#14284a"></circle>
  <circle cx="222.500" cy="704" r="3.200" fill="none" stroke="#fff" stroke-width="1.400"></circle>
  <circle cx="222.500" cy="704" r="1.300" fill="#fff"></circle>
  <path d="M209.500 707.500L216 710.500L219.500 706.500" stroke="#fff" stroke-width="2.400" fill="none" stroke-linejoin="round"></path>
  <circle cx="215.500" cy="711.500" r="2.400" fill="#fff"></circle>
  <!-- spotify -->
  <circle cx="260" cy="707" r="9.500" fill="#84bd00"></circle>
  <g fill="none" stroke="#1a1a1a" stroke-linecap="round"><path d="M254 703.500C258.500 702 263 702.500 266.500 704.500" stroke-width="2"></path><path d="M254.500 707.300C258.500 706 262.500 706.500 265.500 708.200" stroke-width="1.700"></path><path d="M255.300 710.800C258.500 709.800 261.500 710.200 264 711.600" stroke-width="1.400"></path></g>
  <!-- origin -->
  <path d="M303 696.500C300 699 298.500 700 296.500 702.500C293 707 294.500 713 299 715C298 716.500 298.500 717.500 300 718.500C301.500 716 304 715 306.500 712C309.500 708 308.500 702.500 304.500 700C305 698.500 304.500 697.500 303 696.500ZM301.500 704.200A3 3 0 1 1 301.500 710.200A3 3 0 1 1 301.500 704.200Z" fill="#f05a22" fill-rule="evenodd"></path>
  <!-- Ae -->
  <rect x="334" y="697.500" width="18" height="16" fill="#2a0d4f" stroke="#a890dc" stroke-width="1.200"></rect>
  <text x="336.200" y="710" font-family="Liberation Sans" font-weight="bold" font-size="10.500" fill="#cdb4ff" textLength="13.500" lengthAdjust="spacingAndGlyphs">Ae</text>
  <!-- Ps -->
  <rect x="376" y="697.500" width="18" height="16" fill="#0d1a52" stroke="#7aa2ea" stroke-width="1.200"></rect>
  <text x="378.500" y="710" font-family="Liberation Sans" font-weight="bold" font-size="10.500" fill="#8fbcff" textLength="13" lengthAdjust="spacingAndGlyphs">Ps</text>
  <!-- Ai -->
  <rect x="417" y="697.500" width="18" height="16" fill="#3a1c00" stroke="#e9a030" stroke-width="1.200"></rect>
  <text x="420.500" y="710" font-family="Liberation Sans" font-weight="bold" font-size="10.500" fill="#ffb43a" textLength="10.500" lengthAdjust="spacingAndGlyphs">Ai</text>
  <!-- camtasia-like x2 -->
  <g id="camt"><path d="M459.500 704.500L469.500 698.500L477 709L466.500 715.500Z" fill="#3c4440" stroke="#9aa49c" stroke-width="1"></path>
  <path d="M464.500 708.500L466 703L469 709.500L471 704" stroke="#6ad24a" stroke-width="1.500" fill="none"></path></g>
  <use href="#camt" transform="translate(41 0)"></use>
  <circle cx="513" cy="712.500" r="3.300" fill="#e0202a" stroke="#f0a0a0" stroke-width=".6"></circle>
  <!-- tray -->
<g transform="translate(0 -2)">
  <path d="M1166.500 710.500L1169 707.500L1171.500 710.500Z" fill="#333"></path>
  <path d="M1181.500 703V714.500" stroke="#f4f4f4" stroke-width="1.200"></path><path d="M1182 703.500C1184 702.500 1186 704.500 1189 703.500V709C1186 710 1184 708 1182 709Z" fill="#f4f4f4" stroke="#888" stroke-width=".4"></path>
  <g fill="#f4f4f4" stroke="#999" stroke-width=".3"><rect x="1195.500" y="711" width="1.600" height="3"></rect><rect x="1198" y="709" width="1.600" height="5"></rect><rect x="1200.500" y="707" width="1.600" height="7"></rect><rect x="1203" y="705" width="1.600" height="9"></rect><rect x="1205.500" y="703" width="1.600" height="11"></rect></g>
  <path d="M1212 706.500H1214.500L1218 703V714.500L1214.500 711H1212Z" fill="#f4f4f4" stroke="#888" stroke-width=".4"></path><path d="M1220 705.500C1221.500 707.500 1221.500 710 1220 712" stroke="#f4f4f4" stroke-width="1" fill="none"></path>
</g>
  <text x="1237.500" y="704" font-family="Liberation Sans" font-size="8.500" fill="#2a2a2a" textLength="27" lengthAdjust="spacingAndGlyphs">3:27 PM</text>
  <text x="1236.500" y="715.500" font-family="Liberation Sans" font-size="8.500" fill="#2a2a2a" textLength="29.500" lengthAdjust="spacingAndGlyphs">1/6/2015</text>
</svg>
</div>

</body></html>
